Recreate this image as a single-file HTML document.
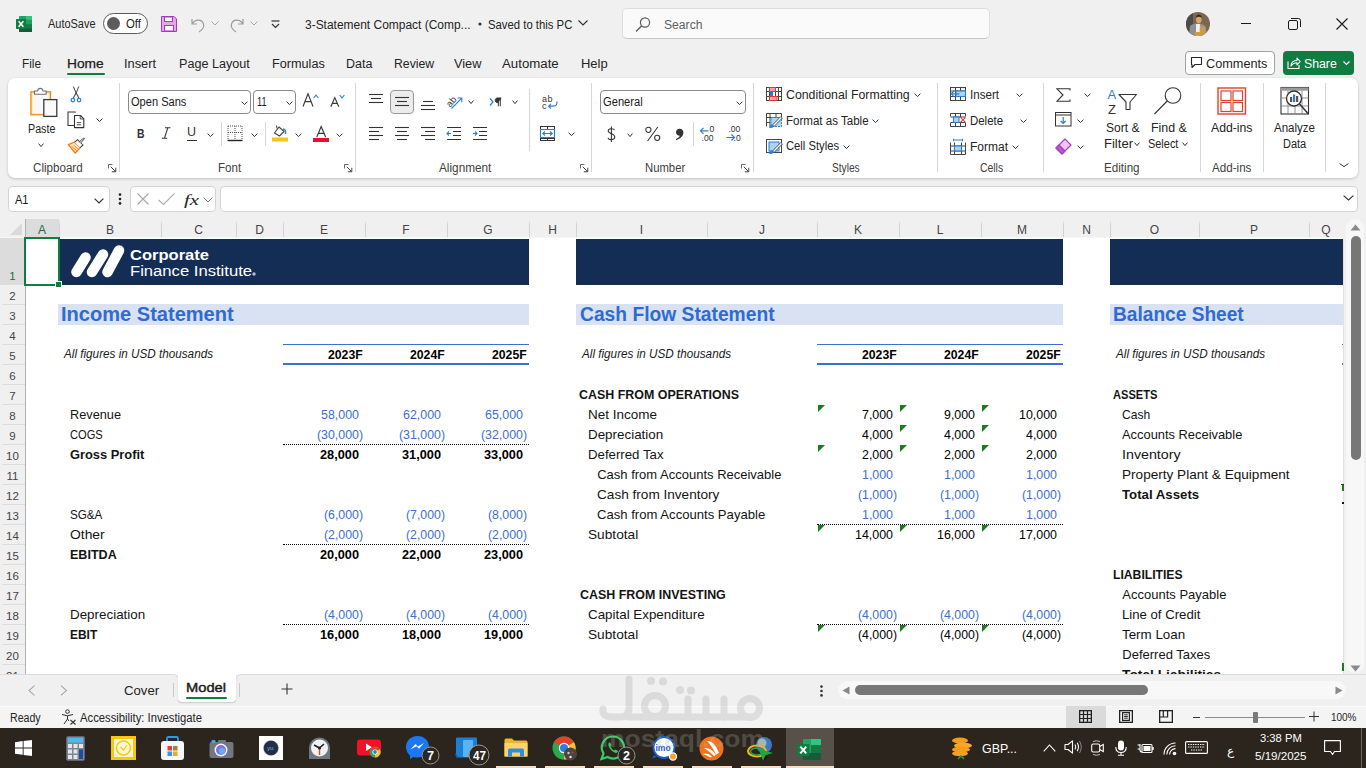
<!DOCTYPE html>
<html><head><meta charset="utf-8"><title>Excel</title>
<style>
html,body{margin:0;padding:0;width:1366px;height:768px;overflow:hidden;background:#f0f0f0;font-family:"Liberation Sans",sans-serif;}
body{position:relative;}
svg{overflow:visible;}
</style></head><body>
<div style="position:absolute;left:8px;top:78px;width:1350px;height:100px;background:#ffffff;border-radius:7px;box-shadow:0 1px 3px rgba(0,0,0,0.2);"></div><div style="position:absolute;left:25px;top:238px;width:1319px;height:436px;background:#ffffff;"></div><div style="position:absolute;left:0px;top:219px;width:1344px;height:19px;background:#f0f0f0;"></div><div style="position:absolute;left:25px;top:219px;width:34px;height:19px;background:#dcdcdc;"></div><div style="position:absolute;left:0px;top:237px;width:1344px;height:1px;background:#f6f6f6;"></div><div style="position:absolute;left:37.99px;top:223.64px;white-space:pre;line-height:1;font-family:'Liberation Sans',sans-serif;font-size:12px;font-weight:normal;font-style:normal;color:#1e6b3e;">A</div><div style="position:absolute;left:59px;top:220px;width:1px;height:17px;background:linear-gradient(to bottom, rgba(212,212,212,0), #d2d2d2 30%, #d2d2d2);"></div><div style="position:absolute;left:105.99px;top:223.64px;white-space:pre;line-height:1;font-family:'Liberation Sans',sans-serif;font-size:12px;font-weight:normal;font-style:normal;color:#444444;">B</div><div style="position:absolute;left:161px;top:220px;width:1px;height:17px;background:linear-gradient(to bottom, rgba(212,212,212,0), #d2d2d2 30%, #d2d2d2);"></div><div style="position:absolute;left:194.16px;top:223.64px;white-space:pre;line-height:1;font-family:'Liberation Sans',sans-serif;font-size:12px;font-weight:normal;font-style:normal;color:#444444;">C</div><div style="position:absolute;left:236px;top:220px;width:1px;height:17px;background:linear-gradient(to bottom, rgba(212,212,212,0), #d2d2d2 30%, #d2d2d2);"></div><div style="position:absolute;left:255.16px;top:223.64px;white-space:pre;line-height:1;font-family:'Liberation Sans',sans-serif;font-size:12px;font-weight:normal;font-style:normal;color:#444444;">D</div><div style="position:absolute;left:283px;top:220px;width:1px;height:17px;background:linear-gradient(to bottom, rgba(212,212,212,0), #d2d2d2 30%, #d2d2d2);"></div><div style="position:absolute;left:319.99px;top:223.64px;white-space:pre;line-height:1;font-family:'Liberation Sans',sans-serif;font-size:12px;font-weight:normal;font-style:normal;color:#444444;">E</div><div style="position:absolute;left:365px;top:220px;width:1px;height:17px;background:linear-gradient(to bottom, rgba(212,212,212,0), #d2d2d2 30%, #d2d2d2);"></div><div style="position:absolute;left:402.33px;top:223.64px;white-space:pre;line-height:1;font-family:'Liberation Sans',sans-serif;font-size:12px;font-weight:normal;font-style:normal;color:#444444;">F</div><div style="position:absolute;left:447px;top:220px;width:1px;height:17px;background:linear-gradient(to bottom, rgba(212,212,212,0), #d2d2d2 30%, #d2d2d2);"></div><div style="position:absolute;left:483.33px;top:223.64px;white-space:pre;line-height:1;font-family:'Liberation Sans',sans-serif;font-size:12px;font-weight:normal;font-style:normal;color:#444444;">G</div><div style="position:absolute;left:529px;top:220px;width:1px;height:17px;background:linear-gradient(to bottom, rgba(212,212,212,0), #d2d2d2 30%, #d2d2d2);"></div><div style="position:absolute;left:548.16px;top:223.64px;white-space:pre;line-height:1;font-family:'Liberation Sans',sans-serif;font-size:12px;font-weight:normal;font-style:normal;color:#444444;">H</div><div style="position:absolute;left:576px;top:220px;width:1px;height:17px;background:linear-gradient(to bottom, rgba(212,212,212,0), #d2d2d2 30%, #d2d2d2);"></div><div style="position:absolute;left:639.83px;top:223.64px;white-space:pre;line-height:1;font-family:'Liberation Sans',sans-serif;font-size:12px;font-weight:normal;font-style:normal;color:#444444;">I</div><div style="position:absolute;left:707px;top:220px;width:1px;height:17px;background:linear-gradient(to bottom, rgba(212,212,212,0), #d2d2d2 30%, #d2d2d2);"></div><div style="position:absolute;left:759.00px;top:223.64px;white-space:pre;line-height:1;font-family:'Liberation Sans',sans-serif;font-size:12px;font-weight:normal;font-style:normal;color:#444444;">J</div><div style="position:absolute;left:817px;top:220px;width:1px;height:17px;background:linear-gradient(to bottom, rgba(212,212,212,0), #d2d2d2 30%, #d2d2d2);"></div><div style="position:absolute;left:853.99px;top:223.64px;white-space:pre;line-height:1;font-family:'Liberation Sans',sans-serif;font-size:12px;font-weight:normal;font-style:normal;color:#444444;">K</div><div style="position:absolute;left:899px;top:220px;width:1px;height:17px;background:linear-gradient(to bottom, rgba(212,212,212,0), #d2d2d2 30%, #d2d2d2);"></div><div style="position:absolute;left:936.66px;top:223.64px;white-space:pre;line-height:1;font-family:'Liberation Sans',sans-serif;font-size:12px;font-weight:normal;font-style:normal;color:#444444;">L</div><div style="position:absolute;left:981px;top:220px;width:1px;height:17px;background:linear-gradient(to bottom, rgba(212,212,212,0), #d2d2d2 30%, #d2d2d2);"></div><div style="position:absolute;left:1017.00px;top:223.64px;white-space:pre;line-height:1;font-family:'Liberation Sans',sans-serif;font-size:12px;font-weight:normal;font-style:normal;color:#444444;">M</div><div style="position:absolute;left:1063px;top:220px;width:1px;height:17px;background:linear-gradient(to bottom, rgba(212,212,212,0), #d2d2d2 30%, #d2d2d2);"></div><div style="position:absolute;left:1082.16px;top:223.64px;white-space:pre;line-height:1;font-family:'Liberation Sans',sans-serif;font-size:12px;font-weight:normal;font-style:normal;color:#444444;">N</div><div style="position:absolute;left:1110px;top:220px;width:1px;height:17px;background:linear-gradient(to bottom, rgba(212,212,212,0), #d2d2d2 30%, #d2d2d2);"></div><div style="position:absolute;left:1149.83px;top:223.64px;white-space:pre;line-height:1;font-family:'Liberation Sans',sans-serif;font-size:12px;font-weight:normal;font-style:normal;color:#444444;">O</div><div style="position:absolute;left:1199px;top:220px;width:1px;height:17px;background:linear-gradient(to bottom, rgba(212,212,212,0), #d2d2d2 30%, #d2d2d2);"></div><div style="position:absolute;left:1249.99px;top:223.64px;white-space:pre;line-height:1;font-family:'Liberation Sans',sans-serif;font-size:12px;font-weight:normal;font-style:normal;color:#444444;">P</div><div style="position:absolute;left:1309px;top:220px;width:1px;height:17px;background:linear-gradient(to bottom, rgba(212,212,212,0), #d2d2d2 30%, #d2d2d2);"></div><div style="position:absolute;left:1321.33px;top:223.64px;white-space:pre;line-height:1;font-family:'Liberation Sans',sans-serif;font-size:12px;font-weight:normal;font-style:normal;color:#444444;">Q</div><svg style="position:absolute;left:10px;top:223px;" width="12" height="12" viewBox="0 0 12 12"><polygon points="12,0 12,12 0,12" fill="#dadada"/></svg><div style="position:absolute;left:0px;top:238px;width:25px;height:436px;background:#f0f0f0;"></div><div style="position:absolute;left:0px;top:238px;width:25px;height:47px;background:#dcdcdc;"></div><div style="position:absolute;left:25px;top:219px;width:1px;height:455px;background:#b0b0b0;"></div><div style="position:absolute;left:2px;top:284px;width:23px;height:1px;background:#dedede;"></div><div style="position:absolute;left:9.30px;top:270.67px;white-space:pre;line-height:1;font-family:'Liberation Sans',sans-serif;font-size:11.5px;font-weight:normal;font-style:normal;color:#1e6b3e;">1</div><div style="position:absolute;left:2px;top:304px;width:23px;height:1px;background:#dedede;"></div><div style="position:absolute;left:9.30px;top:290.67px;white-space:pre;line-height:1;font-family:'Liberation Sans',sans-serif;font-size:11.5px;font-weight:normal;font-style:normal;color:#444444;">2</div><div style="position:absolute;left:2px;top:324px;width:23px;height:1px;background:#dedede;"></div><div style="position:absolute;left:9.30px;top:310.67px;white-space:pre;line-height:1;font-family:'Liberation Sans',sans-serif;font-size:11.5px;font-weight:normal;font-style:normal;color:#444444;">3</div><div style="position:absolute;left:2px;top:344px;width:23px;height:1px;background:#dedede;"></div><div style="position:absolute;left:9.30px;top:330.67px;white-space:pre;line-height:1;font-family:'Liberation Sans',sans-serif;font-size:11.5px;font-weight:normal;font-style:normal;color:#444444;">4</div><div style="position:absolute;left:2px;top:364px;width:23px;height:1px;background:#dedede;"></div><div style="position:absolute;left:9.30px;top:350.67px;white-space:pre;line-height:1;font-family:'Liberation Sans',sans-serif;font-size:11.5px;font-weight:normal;font-style:normal;color:#444444;">5</div><div style="position:absolute;left:2px;top:384px;width:23px;height:1px;background:#dedede;"></div><div style="position:absolute;left:9.30px;top:370.67px;white-space:pre;line-height:1;font-family:'Liberation Sans',sans-serif;font-size:11.5px;font-weight:normal;font-style:normal;color:#444444;">6</div><div style="position:absolute;left:2px;top:404px;width:23px;height:1px;background:#dedede;"></div><div style="position:absolute;left:9.30px;top:390.67px;white-space:pre;line-height:1;font-family:'Liberation Sans',sans-serif;font-size:11.5px;font-weight:normal;font-style:normal;color:#444444;">7</div><div style="position:absolute;left:2px;top:424px;width:23px;height:1px;background:#dedede;"></div><div style="position:absolute;left:9.30px;top:410.67px;white-space:pre;line-height:1;font-family:'Liberation Sans',sans-serif;font-size:11.5px;font-weight:normal;font-style:normal;color:#444444;">8</div><div style="position:absolute;left:2px;top:444px;width:23px;height:1px;background:#dedede;"></div><div style="position:absolute;left:9.30px;top:430.67px;white-space:pre;line-height:1;font-family:'Liberation Sans',sans-serif;font-size:11.5px;font-weight:normal;font-style:normal;color:#444444;">9</div><div style="position:absolute;left:2px;top:464px;width:23px;height:1px;background:#dedede;"></div><div style="position:absolute;left:6.10px;top:450.67px;white-space:pre;line-height:1;font-family:'Liberation Sans',sans-serif;font-size:11.5px;font-weight:normal;font-style:normal;color:#444444;">10</div><div style="position:absolute;left:2px;top:484px;width:23px;height:1px;background:#dedede;"></div><div style="position:absolute;left:6.52px;top:470.67px;white-space:pre;line-height:1;font-family:'Liberation Sans',sans-serif;font-size:11.5px;font-weight:normal;font-style:normal;color:#444444;">11</div><div style="position:absolute;left:2px;top:504px;width:23px;height:1px;background:#dedede;"></div><div style="position:absolute;left:6.10px;top:490.67px;white-space:pre;line-height:1;font-family:'Liberation Sans',sans-serif;font-size:11.5px;font-weight:normal;font-style:normal;color:#444444;">12</div><div style="position:absolute;left:2px;top:524px;width:23px;height:1px;background:#dedede;"></div><div style="position:absolute;left:6.10px;top:510.67px;white-space:pre;line-height:1;font-family:'Liberation Sans',sans-serif;font-size:11.5px;font-weight:normal;font-style:normal;color:#444444;">13</div><div style="position:absolute;left:2px;top:544px;width:23px;height:1px;background:#dedede;"></div><div style="position:absolute;left:6.10px;top:530.67px;white-space:pre;line-height:1;font-family:'Liberation Sans',sans-serif;font-size:11.5px;font-weight:normal;font-style:normal;color:#444444;">14</div><div style="position:absolute;left:2px;top:564px;width:23px;height:1px;background:#dedede;"></div><div style="position:absolute;left:6.10px;top:550.67px;white-space:pre;line-height:1;font-family:'Liberation Sans',sans-serif;font-size:11.5px;font-weight:normal;font-style:normal;color:#444444;">15</div><div style="position:absolute;left:2px;top:584px;width:23px;height:1px;background:#dedede;"></div><div style="position:absolute;left:6.10px;top:570.67px;white-space:pre;line-height:1;font-family:'Liberation Sans',sans-serif;font-size:11.5px;font-weight:normal;font-style:normal;color:#444444;">16</div><div style="position:absolute;left:2px;top:604px;width:23px;height:1px;background:#dedede;"></div><div style="position:absolute;left:6.10px;top:590.67px;white-space:pre;line-height:1;font-family:'Liberation Sans',sans-serif;font-size:11.5px;font-weight:normal;font-style:normal;color:#444444;">17</div><div style="position:absolute;left:2px;top:624px;width:23px;height:1px;background:#dedede;"></div><div style="position:absolute;left:6.10px;top:610.67px;white-space:pre;line-height:1;font-family:'Liberation Sans',sans-serif;font-size:11.5px;font-weight:normal;font-style:normal;color:#444444;">18</div><div style="position:absolute;left:2px;top:644px;width:23px;height:1px;background:#dedede;"></div><div style="position:absolute;left:6.10px;top:630.67px;white-space:pre;line-height:1;font-family:'Liberation Sans',sans-serif;font-size:11.5px;font-weight:normal;font-style:normal;color:#444444;">19</div><div style="position:absolute;left:2px;top:664px;width:23px;height:1px;background:#dedede;"></div><div style="position:absolute;left:6.10px;top:650.67px;white-space:pre;line-height:1;font-family:'Liberation Sans',sans-serif;font-size:11.5px;font-weight:normal;font-style:normal;color:#444444;">20</div><div style="position:absolute;left:6.10px;top:670.67px;white-space:pre;line-height:1;font-family:'Liberation Sans',sans-serif;font-size:11.5px;font-weight:normal;font-style:normal;color:#444444;">21</div><div style="position:absolute;left:59px;top:239px;width:470px;height:46px;background:#142d55;"></div><div style="position:absolute;left:576px;top:239px;width:487px;height:46px;background:#142d55;"></div><div style="position:absolute;left:1110px;top:239px;width:234px;height:46px;background:#142d55;"></div><div style="position:absolute;left:58px;top:304px;width:471px;height:21px;background:#d9e2f3;"></div><div style="position:absolute;left:576px;top:304px;width:487px;height:21px;background:#d9e2f3;"></div><div style="position:absolute;left:1110px;top:304px;width:234px;height:21px;background:#d9e2f3;"></div><div style="position:absolute;left:61.20px;top:305.49px;white-space:pre;line-height:1;font-family:'Liberation Sans',sans-serif;font-size:19.5px;font-weight:bold;font-style:normal;color:#2f6bd5;transform:scaleX(1.0282);transform-origin:0 0;">Income Statement</div><div style="position:absolute;left:580.00px;top:305.49px;white-space:pre;line-height:1;font-family:'Liberation Sans',sans-serif;font-size:19.5px;font-weight:bold;font-style:normal;color:#2f6bd5;transform:scaleX(0.9868);transform-origin:0 0;">Cash Flow Statement</div><div style="position:absolute;left:1113.40px;top:305.49px;white-space:pre;line-height:1;font-family:'Liberation Sans',sans-serif;font-size:19.5px;font-weight:bold;font-style:normal;color:#2f6bd5;transform:scaleX(0.9804);transform-origin:0 0;">Balance Sheet</div><div style="position:absolute;left:63.70px;top:347.84px;white-space:pre;line-height:1;font-family:'Liberation Sans',sans-serif;font-size:12px;font-weight:normal;font-style:italic;color:#1a1a1a;transform:scaleX(0.9755);transform-origin:0 0;">All figures in USD thousands</div><div style="position:absolute;left:581.80px;top:347.84px;white-space:pre;line-height:1;font-family:'Liberation Sans',sans-serif;font-size:12px;font-weight:normal;font-style:italic;color:#1a1a1a;transform:scaleX(0.9755);transform-origin:0 0;">All figures in USD thousands</div><div style="position:absolute;left:1115.70px;top:347.84px;white-space:pre;line-height:1;font-family:'Liberation Sans',sans-serif;font-size:12px;font-weight:normal;font-style:italic;color:#1a1a1a;transform:scaleX(0.9755);transform-origin:0 0;">All figures in USD thousands</div><div style="position:absolute;left:283px;top:344px;width:246px;height:1px;background:#3a6fd6;"></div><div style="position:absolute;left:283px;top:363px;width:246px;height:2px;background:#3a6fd6;"></div><div style="position:absolute;left:817px;top:344px;width:246px;height:1px;background:#3a6fd6;"></div><div style="position:absolute;left:817px;top:363px;width:246px;height:2px;background:#3a6fd6;"></div><div style="position:absolute;left:1342px;top:344px;width:2px;height:1px;background:#3a6fd6;"></div><div style="position:absolute;left:1342px;top:363px;width:2px;height:2px;background:#3a6fd6;"></div><div style="position:absolute;left:328.30px;top:349.02px;white-space:pre;line-height:1;font-family:'Liberation Sans',sans-serif;font-size:12.5px;font-weight:bold;font-style:normal;color:#000000;transform:scaleX(0.9788);transform-origin:0 0;">2023F</div><div style="position:absolute;left:410.30px;top:349.02px;white-space:pre;line-height:1;font-family:'Liberation Sans',sans-serif;font-size:12.5px;font-weight:bold;font-style:normal;color:#000000;transform:scaleX(0.9788);transform-origin:0 0;">2024F</div><div style="position:absolute;left:492.30px;top:349.02px;white-space:pre;line-height:1;font-family:'Liberation Sans',sans-serif;font-size:12.5px;font-weight:bold;font-style:normal;color:#000000;transform:scaleX(0.9788);transform-origin:0 0;">2025F</div><div style="position:absolute;left:861.80px;top:349.02px;white-space:pre;line-height:1;font-family:'Liberation Sans',sans-serif;font-size:12.5px;font-weight:bold;font-style:normal;color:#000000;transform:scaleX(0.9788);transform-origin:0 0;">2023F</div><div style="position:absolute;left:943.80px;top:349.02px;white-space:pre;line-height:1;font-family:'Liberation Sans',sans-serif;font-size:12.5px;font-weight:bold;font-style:normal;color:#000000;transform:scaleX(0.9788);transform-origin:0 0;">2024F</div><div style="position:absolute;left:1025.80px;top:349.02px;white-space:pre;line-height:1;font-family:'Liberation Sans',sans-serif;font-size:12.5px;font-weight:bold;font-style:normal;color:#000000;transform:scaleX(0.9788);transform-origin:0 0;">2025F</div><div style="position:absolute;left:70.30px;top:408.00px;white-space:pre;line-height:1;font-family:'Liberation Sans',sans-serif;font-size:13px;font-weight:normal;font-style:normal;color:#141414;transform:scaleX(0.9799);transform-origin:0 0;">Revenue</div><div style="position:absolute;left:320.80px;top:409.22px;white-space:pre;line-height:1;font-family:'Liberation Sans',sans-serif;font-size:12.5px;font-weight:normal;font-style:normal;color:#3b6fd2;transform:scaleX(0.9939);transform-origin:0 0;">58,000</div><div style="position:absolute;left:402.80px;top:409.22px;white-space:pre;line-height:1;font-family:'Liberation Sans',sans-serif;font-size:12.5px;font-weight:normal;font-style:normal;color:#3b6fd2;transform:scaleX(0.9939);transform-origin:0 0;">62,000</div><div style="position:absolute;left:484.80px;top:409.22px;white-space:pre;line-height:1;font-family:'Liberation Sans',sans-serif;font-size:12.5px;font-weight:normal;font-style:normal;color:#3b6fd2;transform:scaleX(0.9939);transform-origin:0 0;">65,000</div><div style="position:absolute;left:70.30px;top:428.00px;white-space:pre;line-height:1;font-family:'Liberation Sans',sans-serif;font-size:13px;font-weight:normal;font-style:normal;color:#141414;transform:scaleX(0.8565);transform-origin:0 0;">COGS</div><div style="position:absolute;left:317.20px;top:429.22px;white-space:pre;line-height:1;font-family:'Liberation Sans',sans-serif;font-size:12.5px;font-weight:normal;font-style:normal;color:#3b6fd2;transform:scaleX(0.9879);transform-origin:0 0;">(30,000)</div><div style="position:absolute;left:399.20px;top:429.22px;white-space:pre;line-height:1;font-family:'Liberation Sans',sans-serif;font-size:12.5px;font-weight:normal;font-style:normal;color:#3b6fd2;transform:scaleX(0.9879);transform-origin:0 0;">(31,000)</div><div style="position:absolute;left:481.20px;top:429.22px;white-space:pre;line-height:1;font-family:'Liberation Sans',sans-serif;font-size:12.5px;font-weight:normal;font-style:normal;color:#3b6fd2;transform:scaleX(0.9879);transform-origin:0 0;">(32,000)</div><div style="position:absolute;left:70.30px;top:448.00px;white-space:pre;line-height:1;font-family:'Liberation Sans',sans-serif;font-size:13px;font-weight:bold;font-style:normal;color:#141414;transform:scaleX(0.9890);transform-origin:0 0;">Gross Profit</div><div style="position:absolute;left:319.80px;top:449.22px;white-space:pre;line-height:1;font-family:'Liberation Sans',sans-serif;font-size:12.5px;font-weight:bold;font-style:normal;color:#000000;transform:scaleX(1.0200);transform-origin:0 0;">28,000</div><div style="position:absolute;left:401.80px;top:449.22px;white-space:pre;line-height:1;font-family:'Liberation Sans',sans-serif;font-size:12.5px;font-weight:bold;font-style:normal;color:#000000;transform:scaleX(1.0200);transform-origin:0 0;">31,000</div><div style="position:absolute;left:483.80px;top:449.22px;white-space:pre;line-height:1;font-family:'Liberation Sans',sans-serif;font-size:12.5px;font-weight:bold;font-style:normal;color:#000000;transform:scaleX(1.0200);transform-origin:0 0;">33,000</div><div style="position:absolute;left:70.30px;top:508.00px;white-space:pre;line-height:1;font-family:'Liberation Sans',sans-serif;font-size:13px;font-weight:normal;font-style:normal;color:#141414;transform:scaleX(0.8969);transform-origin:0 0;">SG&amp;A</div><div style="position:absolute;left:324.20px;top:509.22px;white-space:pre;line-height:1;font-family:'Liberation Sans',sans-serif;font-size:12.5px;font-weight:normal;font-style:normal;color:#3b6fd2;transform:scaleX(0.9846);transform-origin:0 0;">(6,000)</div><div style="position:absolute;left:406.20px;top:509.22px;white-space:pre;line-height:1;font-family:'Liberation Sans',sans-serif;font-size:12.5px;font-weight:normal;font-style:normal;color:#3b6fd2;transform:scaleX(0.9846);transform-origin:0 0;">(7,000)</div><div style="position:absolute;left:488.20px;top:509.22px;white-space:pre;line-height:1;font-family:'Liberation Sans',sans-serif;font-size:12.5px;font-weight:normal;font-style:normal;color:#3b6fd2;transform:scaleX(0.9846);transform-origin:0 0;">(8,000)</div><div style="position:absolute;left:70.30px;top:528.00px;white-space:pre;line-height:1;font-family:'Liberation Sans',sans-serif;font-size:13px;font-weight:normal;font-style:normal;color:#141414;transform:scaleX(1.0672);transform-origin:0 0;">Other</div><div style="position:absolute;left:324.20px;top:529.22px;white-space:pre;line-height:1;font-family:'Liberation Sans',sans-serif;font-size:12.5px;font-weight:normal;font-style:normal;color:#3b6fd2;transform:scaleX(0.9846);transform-origin:0 0;">(2,000)</div><div style="position:absolute;left:406.20px;top:529.22px;white-space:pre;line-height:1;font-family:'Liberation Sans',sans-serif;font-size:12.5px;font-weight:normal;font-style:normal;color:#3b6fd2;transform:scaleX(0.9846);transform-origin:0 0;">(2,000)</div><div style="position:absolute;left:488.20px;top:529.22px;white-space:pre;line-height:1;font-family:'Liberation Sans',sans-serif;font-size:12.5px;font-weight:normal;font-style:normal;color:#3b6fd2;transform:scaleX(0.9846);transform-origin:0 0;">(2,000)</div><div style="position:absolute;left:70.30px;top:548.00px;white-space:pre;line-height:1;font-family:'Liberation Sans',sans-serif;font-size:13px;font-weight:bold;font-style:normal;color:#141414;transform:scaleX(0.9651);transform-origin:0 0;">EBITDA</div><div style="position:absolute;left:319.80px;top:549.22px;white-space:pre;line-height:1;font-family:'Liberation Sans',sans-serif;font-size:12.5px;font-weight:bold;font-style:normal;color:#000000;transform:scaleX(1.0200);transform-origin:0 0;">20,000</div><div style="position:absolute;left:401.80px;top:549.22px;white-space:pre;line-height:1;font-family:'Liberation Sans',sans-serif;font-size:12.5px;font-weight:bold;font-style:normal;color:#000000;transform:scaleX(1.0200);transform-origin:0 0;">22,000</div><div style="position:absolute;left:483.80px;top:549.22px;white-space:pre;line-height:1;font-family:'Liberation Sans',sans-serif;font-size:12.5px;font-weight:bold;font-style:normal;color:#000000;transform:scaleX(1.0200);transform-origin:0 0;">23,000</div><div style="position:absolute;left:70.30px;top:608.00px;white-space:pre;line-height:1;font-family:'Liberation Sans',sans-serif;font-size:13px;font-weight:normal;font-style:normal;color:#141414;transform:scaleX(1.0301);transform-origin:0 0;">Depreciation</div><div style="position:absolute;left:324.20px;top:609.22px;white-space:pre;line-height:1;font-family:'Liberation Sans',sans-serif;font-size:12.5px;font-weight:normal;font-style:normal;color:#3b6fd2;transform:scaleX(0.9846);transform-origin:0 0;">(4,000)</div><div style="position:absolute;left:406.20px;top:609.22px;white-space:pre;line-height:1;font-family:'Liberation Sans',sans-serif;font-size:12.5px;font-weight:normal;font-style:normal;color:#3b6fd2;transform:scaleX(0.9846);transform-origin:0 0;">(4,000)</div><div style="position:absolute;left:488.20px;top:609.22px;white-space:pre;line-height:1;font-family:'Liberation Sans',sans-serif;font-size:12.5px;font-weight:normal;font-style:normal;color:#3b6fd2;transform:scaleX(0.9846);transform-origin:0 0;">(4,000)</div><div style="position:absolute;left:70.30px;top:628.00px;white-space:pre;line-height:1;font-family:'Liberation Sans',sans-serif;font-size:13px;font-weight:bold;font-style:normal;color:#141414;transform:scaleX(0.9181);transform-origin:0 0;">EBIT</div><div style="position:absolute;left:319.80px;top:629.22px;white-space:pre;line-height:1;font-family:'Liberation Sans',sans-serif;font-size:12.5px;font-weight:bold;font-style:normal;color:#000000;transform:scaleX(1.0200);transform-origin:0 0;">16,000</div><div style="position:absolute;left:401.80px;top:629.22px;white-space:pre;line-height:1;font-family:'Liberation Sans',sans-serif;font-size:12.5px;font-weight:bold;font-style:normal;color:#000000;transform:scaleX(1.0200);transform-origin:0 0;">18,000</div><div style="position:absolute;left:483.80px;top:629.22px;white-space:pre;line-height:1;font-family:'Liberation Sans',sans-serif;font-size:12.5px;font-weight:bold;font-style:normal;color:#000000;transform:scaleX(1.0200);transform-origin:0 0;">19,000</div><div style="position:absolute;left:283px;top:444px;width:246px;height:0;border-top:1px dotted #000;"></div><div style="position:absolute;left:283px;top:544px;width:246px;height:0;border-top:1px dotted #000;"></div><div style="position:absolute;left:283px;top:624px;width:246px;height:0;border-top:1px dotted #000;"></div><div style="position:absolute;left:579.20px;top:388.00px;white-space:pre;line-height:1;font-family:'Liberation Sans',sans-serif;font-size:13px;font-weight:bold;font-style:normal;color:#141414;transform:scaleX(0.9562);transform-origin:0 0;">CASH FROM OPERATIONS</div><div style="position:absolute;left:588.10px;top:408.00px;white-space:pre;line-height:1;font-family:'Liberation Sans',sans-serif;font-size:13px;font-weight:normal;font-style:normal;color:#141414;transform:scaleX(1.0378);transform-origin:0 0;">Net Income</div><div style="position:absolute;left:861.80px;top:409.22px;white-space:pre;line-height:1;font-family:'Liberation Sans',sans-serif;font-size:12.5px;font-weight:normal;font-style:normal;color:#000000;transform:scaleX(0.9910);transform-origin:0 0;">7,000</div><div style="position:absolute;left:943.80px;top:409.22px;white-space:pre;line-height:1;font-family:'Liberation Sans',sans-serif;font-size:12.5px;font-weight:normal;font-style:normal;color:#000000;transform:scaleX(0.9910);transform-origin:0 0;">9,000</div><div style="position:absolute;left:1018.80px;top:409.22px;white-space:pre;line-height:1;font-family:'Liberation Sans',sans-serif;font-size:12.5px;font-weight:normal;font-style:normal;color:#000000;transform:scaleX(0.9939);transform-origin:0 0;">10,000</div><div style="position:absolute;left:588.10px;top:428.00px;white-space:pre;line-height:1;font-family:'Liberation Sans',sans-serif;font-size:13px;font-weight:normal;font-style:normal;color:#141414;transform:scaleX(1.0301);transform-origin:0 0;">Depreciation</div><div style="position:absolute;left:861.80px;top:429.22px;white-space:pre;line-height:1;font-family:'Liberation Sans',sans-serif;font-size:12.5px;font-weight:normal;font-style:normal;color:#000000;transform:scaleX(0.9910);transform-origin:0 0;">4,000</div><div style="position:absolute;left:943.80px;top:429.22px;white-space:pre;line-height:1;font-family:'Liberation Sans',sans-serif;font-size:12.5px;font-weight:normal;font-style:normal;color:#000000;transform:scaleX(0.9910);transform-origin:0 0;">4,000</div><div style="position:absolute;left:1025.80px;top:429.22px;white-space:pre;line-height:1;font-family:'Liberation Sans',sans-serif;font-size:12.5px;font-weight:normal;font-style:normal;color:#000000;transform:scaleX(0.9910);transform-origin:0 0;">4,000</div><div style="position:absolute;left:588.10px;top:448.00px;white-space:pre;line-height:1;font-family:'Liberation Sans',sans-serif;font-size:13px;font-weight:normal;font-style:normal;color:#141414;transform:scaleX(1.0177);transform-origin:0 0;">Deferred Tax</div><div style="position:absolute;left:861.80px;top:449.22px;white-space:pre;line-height:1;font-family:'Liberation Sans',sans-serif;font-size:12.5px;font-weight:normal;font-style:normal;color:#000000;transform:scaleX(0.9910);transform-origin:0 0;">2,000</div><div style="position:absolute;left:943.80px;top:449.22px;white-space:pre;line-height:1;font-family:'Liberation Sans',sans-serif;font-size:12.5px;font-weight:normal;font-style:normal;color:#000000;transform:scaleX(0.9910);transform-origin:0 0;">2,000</div><div style="position:absolute;left:1025.80px;top:449.22px;white-space:pre;line-height:1;font-family:'Liberation Sans',sans-serif;font-size:12.5px;font-weight:normal;font-style:normal;color:#000000;transform:scaleX(0.9910);transform-origin:0 0;">2,000</div><div style="position:absolute;left:597.20px;top:468.00px;white-space:pre;line-height:1;font-family:'Liberation Sans',sans-serif;font-size:13px;font-weight:normal;font-style:normal;color:#141414;">Cash from Accounts Receivable</div><div style="position:absolute;left:861.80px;top:469.22px;white-space:pre;line-height:1;font-family:'Liberation Sans',sans-serif;font-size:12.5px;font-weight:normal;font-style:normal;color:#3b6fd2;transform:scaleX(0.9910);transform-origin:0 0;">1,000</div><div style="position:absolute;left:943.80px;top:469.22px;white-space:pre;line-height:1;font-family:'Liberation Sans',sans-serif;font-size:12.5px;font-weight:normal;font-style:normal;color:#3b6fd2;transform:scaleX(0.9910);transform-origin:0 0;">1,000</div><div style="position:absolute;left:1025.80px;top:469.22px;white-space:pre;line-height:1;font-family:'Liberation Sans',sans-serif;font-size:12.5px;font-weight:normal;font-style:normal;color:#3b6fd2;transform:scaleX(0.9910);transform-origin:0 0;">1,000</div><div style="position:absolute;left:597.20px;top:488.00px;white-space:pre;line-height:1;font-family:'Liberation Sans',sans-serif;font-size:13px;font-weight:normal;font-style:normal;color:#141414;transform:scaleX(1.0457);transform-origin:0 0;">Cash from Inventory</div><div style="position:absolute;left:858.20px;top:489.22px;white-space:pre;line-height:1;font-family:'Liberation Sans',sans-serif;font-size:12.5px;font-weight:normal;font-style:normal;color:#3b6fd2;transform:scaleX(0.9846);transform-origin:0 0;">(1,000)</div><div style="position:absolute;left:940.20px;top:489.22px;white-space:pre;line-height:1;font-family:'Liberation Sans',sans-serif;font-size:12.5px;font-weight:normal;font-style:normal;color:#3b6fd2;transform:scaleX(0.9846);transform-origin:0 0;">(1,000)</div><div style="position:absolute;left:1022.20px;top:489.22px;white-space:pre;line-height:1;font-family:'Liberation Sans',sans-serif;font-size:12.5px;font-weight:normal;font-style:normal;color:#3b6fd2;transform:scaleX(0.9846);transform-origin:0 0;">(1,000)</div><div style="position:absolute;left:597.20px;top:508.00px;white-space:pre;line-height:1;font-family:'Liberation Sans',sans-serif;font-size:13px;font-weight:normal;font-style:normal;color:#141414;transform:scaleX(1.0077);transform-origin:0 0;">Cash from Accounts Payable</div><div style="position:absolute;left:861.80px;top:509.22px;white-space:pre;line-height:1;font-family:'Liberation Sans',sans-serif;font-size:12.5px;font-weight:normal;font-style:normal;color:#3b6fd2;transform:scaleX(0.9910);transform-origin:0 0;">1,000</div><div style="position:absolute;left:943.80px;top:509.22px;white-space:pre;line-height:1;font-family:'Liberation Sans',sans-serif;font-size:12.5px;font-weight:normal;font-style:normal;color:#3b6fd2;transform:scaleX(0.9910);transform-origin:0 0;">1,000</div><div style="position:absolute;left:1025.80px;top:509.22px;white-space:pre;line-height:1;font-family:'Liberation Sans',sans-serif;font-size:12.5px;font-weight:normal;font-style:normal;color:#3b6fd2;transform:scaleX(0.9910);transform-origin:0 0;">1,000</div><div style="position:absolute;left:588.10px;top:528.00px;white-space:pre;line-height:1;font-family:'Liberation Sans',sans-serif;font-size:13px;font-weight:normal;font-style:normal;color:#141414;transform:scaleX(1.0523);transform-origin:0 0;">Subtotal</div><div style="position:absolute;left:854.80px;top:529.22px;white-space:pre;line-height:1;font-family:'Liberation Sans',sans-serif;font-size:12.5px;font-weight:normal;font-style:normal;color:#000000;transform:scaleX(0.9939);transform-origin:0 0;">14,000</div><div style="position:absolute;left:936.80px;top:529.22px;white-space:pre;line-height:1;font-family:'Liberation Sans',sans-serif;font-size:12.5px;font-weight:normal;font-style:normal;color:#000000;transform:scaleX(0.9939);transform-origin:0 0;">16,000</div><div style="position:absolute;left:1018.80px;top:529.22px;white-space:pre;line-height:1;font-family:'Liberation Sans',sans-serif;font-size:12.5px;font-weight:normal;font-style:normal;color:#000000;transform:scaleX(0.9939);transform-origin:0 0;">17,000</div><div style="position:absolute;left:579.50px;top:588.00px;white-space:pre;line-height:1;font-family:'Liberation Sans',sans-serif;font-size:13px;font-weight:bold;font-style:normal;color:#141414;transform:scaleX(0.9567);transform-origin:0 0;">CASH FROM INVESTING</div><div style="position:absolute;left:588.10px;top:608.00px;white-space:pre;line-height:1;font-family:'Liberation Sans',sans-serif;font-size:13px;font-weight:normal;font-style:normal;color:#141414;transform:scaleX(1.0285);transform-origin:0 0;">Capital Expenditure</div><div style="position:absolute;left:858.20px;top:609.22px;white-space:pre;line-height:1;font-family:'Liberation Sans',sans-serif;font-size:12.5px;font-weight:normal;font-style:normal;color:#3b6fd2;transform:scaleX(0.9846);transform-origin:0 0;">(4,000)</div><div style="position:absolute;left:940.20px;top:609.22px;white-space:pre;line-height:1;font-family:'Liberation Sans',sans-serif;font-size:12.5px;font-weight:normal;font-style:normal;color:#3b6fd2;transform:scaleX(0.9846);transform-origin:0 0;">(4,000)</div><div style="position:absolute;left:1022.20px;top:609.22px;white-space:pre;line-height:1;font-family:'Liberation Sans',sans-serif;font-size:12.5px;font-weight:normal;font-style:normal;color:#3b6fd2;transform:scaleX(0.9846);transform-origin:0 0;">(4,000)</div><div style="position:absolute;left:588.10px;top:628.00px;white-space:pre;line-height:1;font-family:'Liberation Sans',sans-serif;font-size:13px;font-weight:normal;font-style:normal;color:#141414;transform:scaleX(1.0523);transform-origin:0 0;">Subtotal</div><div style="position:absolute;left:858.20px;top:629.22px;white-space:pre;line-height:1;font-family:'Liberation Sans',sans-serif;font-size:12.5px;font-weight:normal;font-style:normal;color:#000000;transform:scaleX(0.9846);transform-origin:0 0;">(4,000)</div><div style="position:absolute;left:940.20px;top:629.22px;white-space:pre;line-height:1;font-family:'Liberation Sans',sans-serif;font-size:12.5px;font-weight:normal;font-style:normal;color:#000000;transform:scaleX(0.9846);transform-origin:0 0;">(4,000)</div><div style="position:absolute;left:1022.20px;top:629.22px;white-space:pre;line-height:1;font-family:'Liberation Sans',sans-serif;font-size:12.5px;font-weight:normal;font-style:normal;color:#000000;transform:scaleX(0.9846);transform-origin:0 0;">(4,000)</div><div style="position:absolute;left:817px;top:524px;width:246px;height:0;border-top:1px dotted #000;"></div><div style="position:absolute;left:817px;top:624px;width:246px;height:0;border-top:1px dotted #000;"></div><svg style="position:absolute;left:818px;top:405px;" width="7" height="7" viewBox="0 0 7 7"><polygon points="0,0 7,0 0,7" fill="#1a7c1a"/></svg><svg style="position:absolute;left:900px;top:405px;" width="7" height="7" viewBox="0 0 7 7"><polygon points="0,0 7,0 0,7" fill="#1a7c1a"/></svg><svg style="position:absolute;left:982px;top:405px;" width="7" height="7" viewBox="0 0 7 7"><polygon points="0,0 7,0 0,7" fill="#1a7c1a"/></svg><svg style="position:absolute;left:900px;top:425px;" width="7" height="7" viewBox="0 0 7 7"><polygon points="0,0 7,0 0,7" fill="#1a7c1a"/></svg><svg style="position:absolute;left:982px;top:425px;" width="7" height="7" viewBox="0 0 7 7"><polygon points="0,0 7,0 0,7" fill="#1a7c1a"/></svg><svg style="position:absolute;left:818px;top:445px;" width="7" height="7" viewBox="0 0 7 7"><polygon points="0,0 7,0 0,7" fill="#1a7c1a"/></svg><svg style="position:absolute;left:900px;top:445px;" width="7" height="7" viewBox="0 0 7 7"><polygon points="0,0 7,0 0,7" fill="#1a7c1a"/></svg><svg style="position:absolute;left:982px;top:445px;" width="7" height="7" viewBox="0 0 7 7"><polygon points="0,0 7,0 0,7" fill="#1a7c1a"/></svg><svg style="position:absolute;left:818px;top:525px;" width="7" height="7" viewBox="0 0 7 7"><polygon points="0,0 7,0 0,7" fill="#1a7c1a"/></svg><svg style="position:absolute;left:900px;top:525px;" width="7" height="7" viewBox="0 0 7 7"><polygon points="0,0 7,0 0,7" fill="#1a7c1a"/></svg><svg style="position:absolute;left:982px;top:525px;" width="7" height="7" viewBox="0 0 7 7"><polygon points="0,0 7,0 0,7" fill="#1a7c1a"/></svg><svg style="position:absolute;left:818px;top:625px;" width="7" height="7" viewBox="0 0 7 7"><polygon points="0,0 7,0 0,7" fill="#1a7c1a"/></svg><svg style="position:absolute;left:900px;top:625px;" width="7" height="7" viewBox="0 0 7 7"><polygon points="0,0 7,0 0,7" fill="#1a7c1a"/></svg><svg style="position:absolute;left:982px;top:625px;" width="7" height="7" viewBox="0 0 7 7"><polygon points="0,0 7,0 0,7" fill="#1a7c1a"/></svg><div style="position:absolute;left:1112.90px;top:388.00px;white-space:pre;line-height:1;font-family:'Liberation Sans',sans-serif;font-size:13px;font-weight:bold;font-style:normal;color:#141414;transform:scaleX(0.8555);transform-origin:0 0;">ASSETS</div><div style="position:absolute;left:1122.30px;top:408.00px;white-space:pre;line-height:1;font-family:'Liberation Sans',sans-serif;font-size:13px;font-weight:normal;font-style:normal;color:#141414;transform:scaleX(0.9289);transform-origin:0 0;">Cash</div><div style="position:absolute;left:1122.30px;top:428.00px;white-space:pre;line-height:1;font-family:'Liberation Sans',sans-serif;font-size:13px;font-weight:normal;font-style:normal;color:#141414;transform:scaleX(0.9909);transform-origin:0 0;">Accounts Receivable</div><div style="position:absolute;left:1122.30px;top:448.00px;white-space:pre;line-height:1;font-family:'Liberation Sans',sans-serif;font-size:13px;font-weight:normal;font-style:normal;color:#141414;transform:scaleX(1.0956);transform-origin:0 0;">Inventory</div><div style="position:absolute;left:1122.30px;top:468.00px;white-space:pre;line-height:1;font-family:'Liberation Sans',sans-serif;font-size:13px;font-weight:normal;font-style:normal;color:#141414;transform:scaleX(1.0447);transform-origin:0 0;">Property Plant &amp; Equipment</div><div style="position:absolute;left:1122.30px;top:488.00px;white-space:pre;line-height:1;font-family:'Liberation Sans',sans-serif;font-size:13px;font-weight:bold;font-style:normal;color:#141414;transform:scaleX(1.0177);transform-origin:0 0;">Total Assets</div><div style="position:absolute;left:1113.30px;top:568.00px;white-space:pre;line-height:1;font-family:'Liberation Sans',sans-serif;font-size:13px;font-weight:bold;font-style:normal;color:#141414;transform:scaleX(0.9356);transform-origin:0 0;">LIABILITIES</div><div style="position:absolute;left:1122.30px;top:588.00px;white-space:pre;line-height:1;font-family:'Liberation Sans',sans-serif;font-size:13px;font-weight:normal;font-style:normal;color:#141414;">Accounts Payable</div><div style="position:absolute;left:1122.30px;top:608.00px;white-space:pre;line-height:1;font-family:'Liberation Sans',sans-serif;font-size:13px;font-weight:normal;font-style:normal;color:#141414;transform:scaleX(1.0126);transform-origin:0 0;">Line of Credit</div><div style="position:absolute;left:1122.30px;top:628.00px;white-space:pre;line-height:1;font-family:'Liberation Sans',sans-serif;font-size:13px;font-weight:normal;font-style:normal;color:#141414;transform:scaleX(1.0273);transform-origin:0 0;">Term Loan</div><div style="position:absolute;left:1122.30px;top:648.00px;white-space:pre;line-height:1;font-family:'Liberation Sans',sans-serif;font-size:13px;font-weight:normal;font-style:normal;color:#141414;">Deferred Taxes</div><div style="position:absolute;left:1122.30px;top:668.00px;white-space:pre;line-height:1;font-family:'Liberation Sans',sans-serif;font-size:13px;font-weight:bold;font-style:normal;color:#141414;transform:scaleX(1.0590);transform-origin:0 0;">Total Liabilities</div><div style="position:absolute;left:24px;top:237px;width:36px;height:49px;background:transparent;box-sizing:border-box;border:2px solid #107c41;"></div><div style="position:absolute;left:56px;top:282px;width:5px;height:5px;background:#107c41;outline:1px solid #fff;"></div><svg style="position:absolute;left:15px;top:15px;" width="18" height="18" viewBox="0 0 18 18"><rect x="4" y="1" width="13" height="16" rx="0.8" fill="#21a366"/>
<rect x="11" y="1" width="6" height="3.8" fill="#33c481"/><rect x="4" y="4.8" width="13" height="4.4" fill="#2a9a5e"/>
<rect x="4" y="9.2" width="13" height="4" fill="#137f45"/><rect x="4" y="13.2" width="13" height="3.8" fill="#185c37"/>
<rect x="1" y="4" width="10" height="10" rx="0.8" fill="#107c41"/>
<path d="M3.6 6.3 L8.4 11.7 M8.4 6.3 L3.6 11.7" stroke="#fff" stroke-width="1.5"/></svg><div style="position:absolute;left:48.00px;top:18.04px;white-space:pre;line-height:1;font-family:'Liberation Sans',sans-serif;font-size:12px;font-weight:normal;font-style:normal;color:#242424;transform:scaleX(0.9126);transform-origin:0 0;">AutoSave</div><div style="position:absolute;left:103px;top:13px;width:45px;height:21px;background:#ffffff;box-sizing:border-box;border:1px solid #5a5a5a;border-radius:11px;"></div><svg style="position:absolute;left:106px;top:16px;" width="15" height="15" viewBox="0 0 15 15"><circle cx="7.5" cy="7.5" r="6.5" fill="#5c5c5c"/></svg><div style="position:absolute;left:126.00px;top:18.04px;white-space:pre;line-height:1;font-family:'Liberation Sans',sans-serif;font-size:12px;font-weight:normal;font-style:normal;color:#242424;transform:scaleX(0.9496);transform-origin:0 0;">Off</div><svg style="position:absolute;left:161px;top:16px;" width="16" height="16" viewBox="0 0 16 16"><path d="M0.5 0.5 H13 L15.5 3 V15.5 H0.5 Z" fill="#e3a6ec" stroke="#a935c0" stroke-width="1"/>
<rect x="3.5" y="1" width="8" height="4.5" fill="#fff" stroke="#a935c0" stroke-width="1"/>
<rect x="3.5" y="9.5" width="9" height="5.5" fill="#fff" stroke="#a935c0" stroke-width="1"/></svg><svg style="position:absolute;left:190px;top:17px;" width="16" height="16" viewBox="0 0 16 16"><path d="M2 2 V7 H7 M2.5 6.5 C5 2 12 2 13.5 7 C14.5 10 12 13 9 15" fill="none" stroke="#9c9c9c" stroke-width="1.2"/></svg><svg style="position:absolute;left:211px;top:21px;" width="8" height="5" viewBox="0 0 8 5"><path d="M0.5 0.5 L4 4 L7.5 0.5" fill="none" stroke="#a8a8a8" stroke-width="1"/></svg><svg style="position:absolute;left:229px;top:17px;" width="16" height="16" viewBox="0 0 16 16"><path d="M14 2 V7 H9 M13.5 6.5 C11 2 4 2 2.5 7 C1.5 10 4 13 7 15" fill="none" stroke="#9c9c9c" stroke-width="1.2"/></svg><svg style="position:absolute;left:250px;top:21px;" width="8" height="5" viewBox="0 0 8 5"><path d="M0.5 0.5 L4 4 L7.5 0.5" fill="none" stroke="#a8a8a8" stroke-width="1"/></svg><svg style="position:absolute;left:271px;top:20px;" width="9" height="9" viewBox="0 0 9 9"><path d="M0.5 1 H8.5" stroke="#333" stroke-width="1.2"/><path d="M1 4 L4.5 7.5 L8 4" fill="none" stroke="#333" stroke-width="1.2"/></svg><div style="position:absolute;left:305.00px;top:18.89px;white-space:pre;line-height:1;font-family:'Liberation Sans',sans-serif;font-size:12.3px;font-weight:normal;font-style:normal;color:#242424;transform:scaleX(0.9731);transform-origin:0 0;">3-Statement Compact (Comp...</div><svg style="position:absolute;left:478px;top:22px;" width="4" height="4" viewBox="0 0 4 4"><circle cx="2" cy="2" r="1.6" fill="#333"/></svg><div style="position:absolute;left:488.30px;top:18.89px;white-space:pre;line-height:1;font-family:'Liberation Sans',sans-serif;font-size:12.3px;font-weight:normal;font-style:normal;color:#242424;transform:scaleX(0.9204);transform-origin:0 0;">Saved to this PC</div><svg style="position:absolute;left:578px;top:20px;" width="10" height="6" viewBox="0 0 10 6"><path d="M0.5 0.5 L5 5 L9.5 0.5" fill="none" stroke="#333" stroke-width="1.2"/></svg><div style="position:absolute;left:622px;top:8px;width:368px;height:31px;background:#fafafa;box-sizing:border-box;border:1px solid #dedede;border-bottom-color:#c8c8c8;border-radius:5px;"></div><svg style="position:absolute;left:635px;top:17px;" width="16" height="15" viewBox="0 0 16 15"><circle cx="10" cy="5.5" r="4.6" fill="none" stroke="#5a5a5a" stroke-width="1.2"/><path d="M6.8 8.8 L1 14.5" stroke="#5a5a5a" stroke-width="1.3"/></svg><div style="position:absolute;left:664.00px;top:18.72px;white-space:pre;line-height:1;font-family:'Liberation Sans',sans-serif;font-size:12.5px;font-weight:normal;font-style:normal;color:#5f5f5f;transform:scaleX(0.9720);transform-origin:0 0;">Search</div><div style="position:absolute;left:1186px;top:12px;width:24px;height:24px;border-radius:50%;overflow:hidden;"><svg width="24" height="24" viewBox="0 0 24 24" style="position:absolute;left:0;top:0;"><rect width="24" height="24" fill="#7a6652"/><rect x="0" y="0" width="7" height="24" fill="#4d4a48"/><path d="M3 24 L4 14 Q7 11 10.5 11.5 L13.5 11.5 Q18 12 20 15 L21 24 Z" fill="#8e9094"/><path d="M10 12 L14 12 L13.5 24 L10 24 Z" fill="#f3efe6"/><path d="M14 13 L19 15 L19.5 22 L14 24Z" fill="#c49a55"/><rect x="9" y="20" width="6" height="4" fill="#d69a3c"/><ellipse cx="12.8" cy="7.6" rx="2.8" ry="3.6" fill="#d6a862"/><path d="M9.8 6 Q10.5 2.6 13 2.8 Q15.6 3 15.8 6 Q14.5 4.8 12.8 4.8 Q11 4.8 9.8 6Z" fill="#2b2622"/></svg></div><div style="position:absolute;left:1241px;top:23px;width:10px;height:1px;background:#1a1a1a;"></div><svg style="position:absolute;left:1288px;top:18px;" width="13" height="12" viewBox="0 0 13 12"><rect x="0.5" y="2.5" width="9" height="9" rx="1.5" fill="none" stroke="#1a1a1a" stroke-width="1"/><path d="M3 0.5 H10.5 Q12.5 0.5 12.5 2.5 V9" fill="none" stroke="#1a1a1a" stroke-width="1"/></svg><svg style="position:absolute;left:1336px;top:18px;" width="12" height="12" viewBox="0 0 12 12"><path d="M0.5 0.5 L11.5 11.5 M11.5 0.5 L0.5 11.5" stroke="#1a1a1a" stroke-width="1.1"/></svg><div style="position:absolute;left:22.00px;top:58.02px;white-space:pre;line-height:1;font-family:'Liberation Sans',sans-serif;font-size:12.5px;font-weight:normal;font-style:normal;color:#242424;transform:scaleX(0.9426);transform-origin:0 0;">File</div><div style="position:absolute;left:67.30px;top:58.02px;white-space:pre;line-height:1;font-family:'Liberation Sans',sans-serif;font-size:12.5px;font-weight:normal;font-style:normal;color:#1c1c1c;transform:scaleX(1.1007);transform-origin:0 0;-webkit-text-stroke:0.25px #1c1c1c;">Home</div><div style="position:absolute;left:124.00px;top:58.02px;white-space:pre;line-height:1;font-family:'Liberation Sans',sans-serif;font-size:12.5px;font-weight:normal;font-style:normal;color:#242424;transform:scaleX(1.0235);transform-origin:0 0;">Insert</div><div style="position:absolute;left:179.00px;top:58.02px;white-space:pre;line-height:1;font-family:'Liberation Sans',sans-serif;font-size:12.5px;font-weight:normal;font-style:normal;color:#242424;transform:scaleX(1.0085);transform-origin:0 0;">Page Layout</div><div style="position:absolute;left:271.70px;top:58.02px;white-space:pre;line-height:1;font-family:'Liberation Sans',sans-serif;font-size:12.5px;font-weight:normal;font-style:normal;color:#242424;transform:scaleX(1.0136);transform-origin:0 0;">Formulas</div><div style="position:absolute;left:346.00px;top:58.02px;white-space:pre;line-height:1;font-family:'Liberation Sans',sans-serif;font-size:12.5px;font-weight:normal;font-style:normal;color:#242424;">Data</div><div style="position:absolute;left:393.80px;top:58.02px;white-space:pre;line-height:1;font-family:'Liberation Sans',sans-serif;font-size:12.5px;font-weight:normal;font-style:normal;color:#242424;transform:scaleX(0.9805);transform-origin:0 0;">Review</div><div style="position:absolute;left:453.60px;top:58.02px;white-space:pre;line-height:1;font-family:'Liberation Sans',sans-serif;font-size:12.5px;font-weight:normal;font-style:normal;color:#242424;transform:scaleX(1.0195);transform-origin:0 0;">View</div><div style="position:absolute;left:502.30px;top:58.02px;white-space:pre;line-height:1;font-family:'Liberation Sans',sans-serif;font-size:12.5px;font-weight:normal;font-style:normal;color:#242424;transform:scaleX(1.0595);transform-origin:0 0;">Automate</div><div style="position:absolute;left:581.00px;top:58.02px;white-space:pre;line-height:1;font-family:'Liberation Sans',sans-serif;font-size:12.5px;font-weight:normal;font-style:normal;color:#242424;transform:scaleX(1.0382);transform-origin:0 0;">Help</div><div style="position:absolute;left:67px;top:72.5px;width:38px;height:2.5px;background:#107c41;border-radius:2px;"></div><div style="position:absolute;left:1185px;top:51px;width:90px;height:24px;background:#ffffff;box-sizing:border-box;border:1px solid #a0a0a0;border-radius:4px;"></div><svg style="position:absolute;left:1190px;top:56px;" width="13" height="13" viewBox="0 0 13 13"><path d="M1.5 1.5 H11.5 V8.5 H5 L2 11.5 V8.5 H1.5 Z" fill="none" stroke="#242424" stroke-width="1.1" stroke-linejoin="round"/></svg><div style="position:absolute;left:1206.00px;top:57.72px;white-space:pre;line-height:1;font-family:'Liberation Sans',sans-serif;font-size:12.5px;font-weight:normal;font-style:normal;color:#242424;transform:scaleX(1.0159);transform-origin:0 0;">Comments</div><div style="position:absolute;left:1283px;top:51px;width:71px;height:24px;background:#107c41;border-radius:4px;"></div><svg style="position:absolute;left:1287px;top:56px;" width="14" height="14" viewBox="0 0 14 14"><path d="M1 5.5 V12.5 H12 V9" fill="none" stroke="#fff" stroke-width="1.1"/><path d="M4 10 C4 6 7 4.5 10 4.5 V2 L13.2 5.5 L10 9 V6.7 C7.5 6.7 5.5 7.5 4 10Z" fill="none" stroke="#fff" stroke-width="1.1" stroke-linejoin="round"/></svg><div style="position:absolute;left:1304.00px;top:57.72px;white-space:pre;line-height:1;font-family:'Liberation Sans',sans-serif;font-size:12.5px;font-weight:normal;font-style:normal;color:#ffffff;transform:scaleX(0.9832);transform-origin:0 0;">Share</div><svg style="position:absolute;left:1343px;top:61px;" width="7" height="5" viewBox="0 0 7 5"><path d="M0.5 0.5 L3.5 3.5 L6.5 0.5" fill="none" stroke="#fff" stroke-width="1.2"/></svg><svg style="position:absolute;left:29px;top:86px;" width="30" height="32" viewBox="0 0 30 32"><rect x="1.9" y="5.8" width="19.6" height="23" fill="#fde6a8" stroke="#f08a12" stroke-width="1.3"/>
<rect x="3.6" y="7.4" width="16.2" height="19.8" fill="#f8f8f8"/>
<path d="M5.5 8.3 V5 H8.5 C9 1.5 13.5 1.5 14 5 H17.2 V8.3 Z" fill="#fff" stroke="#6e7276" stroke-width="1.1"/>
<rect x="14.8" y="13.6" width="13" height="16.8" fill="#fafafa" stroke="#3a3a3a" stroke-width="1.3"/></svg><div style="position:absolute;left:27.60px;top:123.02px;white-space:pre;line-height:1;font-family:'Liberation Sans',sans-serif;font-size:12.5px;font-weight:normal;font-style:normal;color:#242424;transform:scaleX(0.8571);transform-origin:0 0;">Paste</div><svg style="position:absolute;left:38px;top:142.5px;" width="6" height="5" viewBox="0 0 6 5"><path d="M0.6 0.6 L3.0 3.6 L5.4 0.6" fill="none" stroke="#333" stroke-width="1"/></svg><svg style="position:absolute;left:67px;top:84px;" width="16" height="20" viewBox="0 0 16 20"><path d="M6.4 2.5 L9 9 M11.8 2.5 L9.2 9" stroke="#444" stroke-width="1"/><path d="M9 9 L6.3 14 M9.2 9 L11.9 14" stroke="#444" stroke-width="1.1"/>
<circle cx="5.9" cy="16.1" r="1.75" fill="none" stroke="#2a86db" stroke-width="1.3"/><circle cx="12" cy="16.1" r="1.75" fill="none" stroke="#2a86db" stroke-width="1.3"/></svg><svg style="position:absolute;left:67px;top:111px;" width="18" height="18" viewBox="0 0 18 18"><path d="M8.2 1.8 V1 H1 V14.5 H7" fill="none" stroke="#333" stroke-width="1.05"/>
<path d="M7.5 4.5 H13.5 L16.8 7.8 V16.6 H7.5 Z" fill="#fff" stroke="#333" stroke-width="1.1" stroke-linejoin="round"/>
<path d="M13.2 4.5 V8 H16.8 M9.8 11.6 H14 M9.8 13.8 H14" fill="none" stroke="#444" stroke-width="0.95"/></svg><svg style="position:absolute;left:96px;top:118.3px;" width="7" height="5" viewBox="0 0 7 5"><path d="M0.6 0.6 L3.5 3.6 L6.4 0.6" fill="none" stroke="#333" stroke-width="1"/></svg><svg style="position:absolute;left:67px;top:137px;" width="18" height="17" viewBox="0 0 18 17"><path d="M1.3 7.6 L8.2 16 L13.4 10.6 L7.6 5 Z" fill="#fde6c8" stroke="#ef7b15" stroke-width="1.3" stroke-linejoin="round"/>
<path d="M4.6 9.5 L9.5 13.5 M6.5 8 L10.8 11.8" stroke="#ef7b15" stroke-width="0.9"/>
<path d="M7.8 5.2 L10.5 2.6 L16 8 L13.2 10.6" fill="#fff" stroke="#444" stroke-width="1.05" stroke-linejoin="round"/>
<path d="M12.2 5.3 L16.2 1.2 Q17.2 0.6 17.6 1.6 L13.7 5.9" fill="#fff" stroke="#444" stroke-width="1"/></svg><div style="position:absolute;left:32.60px;top:162.24px;white-space:pre;line-height:1;font-family:'Liberation Sans',sans-serif;font-size:12px;font-weight:normal;font-style:normal;color:#404040;transform:scaleX(0.9674);transform-origin:0 0;">Clipboard</div><svg style="position:absolute;left:108px;top:164px;" width="9" height="9" viewBox="0 0 9 9"><path d="M0.5 4.5 V0.5 H4.5" fill="none" stroke="#555" stroke-width="0.9"/><path d="M2.8 2.8 L7.6 7.6 M3.8 7.8 H7.8 V3.8" fill="none" stroke="#444" stroke-width="1"/></svg><div style="position:absolute;left:119px;top:83px;width:1px;height:89px;background:#d6d6d6;"></div><div style="position:absolute;left:128px;top:90px;width:123px;height:24px;background:#fff;box-sizing:border-box;border:1px solid #8a8a8a;border-radius:4px;"></div><div style="position:absolute;left:131.40px;top:95.62px;white-space:pre;line-height:1;font-family:'Liberation Sans',sans-serif;font-size:12.5px;font-weight:normal;font-style:normal;color:#1a1a1a;transform:scaleX(0.8857);transform-origin:0 0;">Open Sans</div><svg style="position:absolute;left:241px;top:100.5px;" width="7" height="5" viewBox="0 0 7 5"><path d="M0.6 0.6 L3.5 3.6 L6.4 0.6" fill="none" stroke="#333" stroke-width="1"/></svg><div style="position:absolute;left:253px;top:90px;width:43px;height:24px;background:#fff;box-sizing:border-box;border:1px solid #8a8a8a;border-radius:4px;"></div><div style="position:absolute;left:257.00px;top:95.62px;white-space:pre;line-height:1;font-family:'Liberation Sans',sans-serif;font-size:12.5px;font-weight:normal;font-style:normal;color:#1a1a1a;transform:scaleX(0.7316);transform-origin:0 0;">11</div><svg style="position:absolute;left:286px;top:100.5px;" width="7" height="5" viewBox="0 0 7 5"><path d="M0.6 0.6 L3.5 3.6 L6.4 0.6" fill="none" stroke="#333" stroke-width="1"/></svg><svg style="position:absolute;left:302px;top:93px;" width="12" height="14" viewBox="0 0 12 14"><path d="M1 13.5 L6 0.8 L11 13.5 M3 8.6 H9" fill="none" stroke="#3a3a3a" stroke-width="1.15"/></svg><svg style="position:absolute;left:313px;top:94px;" width="6" height="5" viewBox="0 0 6 5"><path d="M0.6 4 L3 1.2 L5.4 4" fill="none" stroke="#2a7fd4" stroke-width="1.1"/></svg><svg style="position:absolute;left:330px;top:97px;" width="10" height="10" viewBox="0 0 10 10"><path d="M0.8 9.7 L4.8 0.6 L8.8 9.7 M2.4 6.3 H7.2" fill="none" stroke="#3a3a3a" stroke-width="1.15"/></svg><svg style="position:absolute;left:339px;top:94px;" width="6" height="5" viewBox="0 0 6 5"><path d="M0.6 1 L3 3.8 L5.4 1" fill="none" stroke="#2a7fd4" stroke-width="1.1"/></svg><div style="position:absolute;left:136.50px;top:126.57px;white-space:pre;line-height:1;font-family:'Liberation Sans',sans-serif;font-size:13.5px;font-weight:bold;font-style:normal;color:#333;transform:scaleX(0.7692);transform-origin:0 0;">B</div><svg style="position:absolute;left:161px;top:127px;" width="10" height="12" viewBox="0 0 10 12"><path d="M4 0.8 H9.5 M0.8 11.2 H6.2 M6.8 0.8 L3.5 11.2" fill="none" stroke="#333" stroke-width="1.1"/></svg><div style="position:absolute;left:187.00px;top:125.92px;white-space:pre;line-height:1;font-family:'Liberation Sans',sans-serif;font-size:12.5px;font-weight:normal;font-style:normal;color:#333;">U</div><div style="position:absolute;left:186.5px;top:139.5px;width:10px;height:1px;background:#333;"></div><svg style="position:absolute;left:207px;top:132.5px;" width="7" height="5" viewBox="0 0 7 5"><path d="M0.6 0.6 L3.5 3.6 L6.4 0.6" fill="none" stroke="#333" stroke-width="1"/></svg><div style="position:absolute;left:221px;top:122px;width:1px;height:24px;background:#d6d6d6;"></div><svg style="position:absolute;left:227px;top:125px;" width="17" height="17" viewBox="0 0 17 17"><path d="M1 1 H15 M1 1 V14 M15 1 V14 M8 1 V14 M1 7.5 H15" fill="none" stroke="#555" stroke-width="1" stroke-dasharray="1 1"/>
<path d="M0.5 15.5 H15.5" stroke="#222" stroke-width="1.4"/></svg><svg style="position:absolute;left:251px;top:132.5px;" width="7" height="5" viewBox="0 0 7 5"><path d="M0.6 0.6 L3.5 3.6 L6.4 0.6" fill="none" stroke="#333" stroke-width="1"/></svg><div style="position:absolute;left:265px;top:122px;width:1px;height:24px;background:#d6d6d6;"></div><svg style="position:absolute;left:271px;top:124px;" width="18" height="18" viewBox="0 0 18 18"><path d="M3.5 9 L8 3 L13 7.5 L8.5 12 Z" fill="#fff" stroke="#444" stroke-width="1.1" stroke-linejoin="round"/>
<path d="M6 4.5 L5.5 1.5" stroke="#444" stroke-width="1.1"/>
<path d="M12 5 Q15 5 14.5 10" fill="none" stroke="#2a7fd4" stroke-width="1.5"/>
<rect x="1" y="13.5" width="16" height="4" fill="#f5c518"/></svg><svg style="position:absolute;left:295px;top:132.5px;" width="7" height="5" viewBox="0 0 7 5"><path d="M0.6 0.6 L3.5 3.6 L6.4 0.6" fill="none" stroke="#333" stroke-width="1"/></svg><svg style="position:absolute;left:316px;top:126px;" width="11" height="12" viewBox="0 0 11 12"><path d="M0.8 11 L5.2 0.6 L9.6 11 M2.6 7.3 H7.8" fill="none" stroke="#3a3a3a" stroke-width="1.15"/></svg><div style="position:absolute;left:313px;top:138px;width:16px;height:4px;background:#e8112d;"></div><svg style="position:absolute;left:336px;top:132.5px;" width="7" height="5" viewBox="0 0 7 5"><path d="M0.6 0.6 L3.5 3.6 L6.4 0.6" fill="none" stroke="#333" stroke-width="1"/></svg><div style="position:absolute;left:218.40px;top:162.24px;white-space:pre;line-height:1;font-family:'Liberation Sans',sans-serif;font-size:12px;font-weight:normal;font-style:normal;color:#404040;transform:scaleX(0.9660);transform-origin:0 0;">Font</div><svg style="position:absolute;left:344px;top:164px;" width="9" height="9" viewBox="0 0 9 9"><path d="M0.5 4.5 V0.5 H4.5" fill="none" stroke="#555" stroke-width="0.9"/><path d="M2.8 2.8 L7.6 7.6 M3.8 7.8 H7.8 V3.8" fill="none" stroke="#444" stroke-width="1"/></svg><div style="position:absolute;left:355px;top:83px;width:1px;height:89px;background:#d6d6d6;"></div><svg style="position:absolute;left:368px;top:93px;" width="16" height="16" viewBox="0 0 16 16"><path d="M1 1.5 H15" stroke="#333" stroke-width="1.1"/><path d="M3 5.5 H13" stroke="#333" stroke-width="1.1"/><path d="M1 9.5 H15" stroke="#333" stroke-width="1.1"/></svg><div style="position:absolute;left:390px;top:90px;width:24px;height:24px;background:#ececec;box-sizing:border-box;border:1px solid #9a9a9a;border-radius:4px;"></div><svg style="position:absolute;left:394px;top:96px;" width="16" height="16" viewBox="0 0 16 16"><path d="M1 1.5 H15" stroke="#333" stroke-width="1.1"/><path d="M3 5.5 H13" stroke="#333" stroke-width="1.1"/><path d="M1 9.5 H15" stroke="#333" stroke-width="1.1"/></svg><svg style="position:absolute;left:420px;top:100px;" width="16" height="16" viewBox="0 0 16 16"><path d="M3 1.5 H13" stroke="#333" stroke-width="1.1"/><path d="M1 5.5 H15" stroke="#333" stroke-width="1.1"/><path d="M1 9.5 H15" stroke="#333" stroke-width="1.1"/></svg><svg style="position:absolute;left:445px;top:93px;" width="20" height="17" viewBox="0 0 20 17"><text x="-0.5" y="11.5" font-family="Liberation Sans" font-size="9.5" fill="#333" transform="rotate(-50 6 7)">ab</text>
<path d="M6.5 15.5 L16.5 5.3 M12.5 5 H16.8 V9.3" fill="none" stroke="#2a7fd4" stroke-width="1.1"/></svg><svg style="position:absolute;left:468px;top:99.5px;" width="6" height="5" viewBox="0 0 6 5"><path d="M0.6 0.6 L3.0 3.6 L5.4 0.6" fill="none" stroke="#333" stroke-width="1"/></svg><svg style="position:absolute;left:489px;top:97px;" width="16" height="10" viewBox="0 0 16 10"><path d="M1 1.5 L4 5 L1 8.5" fill="none" stroke="#2a7fd4" stroke-width="1.2"/><path d="M9.3 1 V9.3 M11.3 1 V9.3 M12.3 1 H8.5 C5.5 1 5.5 5.6 8.5 5.6 H9.3" fill="#333" stroke="#333" stroke-width="1"/></svg><svg style="position:absolute;left:512px;top:99.5px;" width="6" height="5" viewBox="0 0 6 5"><path d="M0.6 0.6 L3.0 3.6 L5.4 0.6" fill="none" stroke="#333" stroke-width="1"/></svg><svg style="position:absolute;left:368px;top:125px;" width="16" height="16" viewBox="0 0 16 16"><path d="M1 2.5 H15" stroke="#333" stroke-width="1.1"/><path d="M1 6.5 H11" stroke="#333" stroke-width="1.1"/><path d="M1 10.5 H15" stroke="#333" stroke-width="1.1"/><path d="M1 14.5 H11" stroke="#333" stroke-width="1.1"/></svg><svg style="position:absolute;left:394px;top:125px;" width="16" height="16" viewBox="0 0 16 16"><path d="M1 2.5 H15" stroke="#333" stroke-width="1.1"/><path d="M3 6.5 H13" stroke="#333" stroke-width="1.1"/><path d="M1 10.5 H15" stroke="#333" stroke-width="1.1"/><path d="M3 14.5 H13" stroke="#333" stroke-width="1.1"/></svg><svg style="position:absolute;left:420px;top:125px;" width="16" height="16" viewBox="0 0 16 16"><path d="M1 2.5 H15" stroke="#333" stroke-width="1.1"/><path d="M5 6.5 H15" stroke="#333" stroke-width="1.1"/><path d="M1 10.5 H15" stroke="#333" stroke-width="1.1"/><path d="M5 14.5 H15" stroke="#333" stroke-width="1.1"/></svg><svg style="position:absolute;left:446px;top:125px;" width="16" height="16" viewBox="0 0 16 16"><path d="M1 2.5 H15 M7 6.5 H15 M7 10.5 H15 M1 14.5 H15" stroke="#333" stroke-width="1.1"/>
<path d="M5 8.5 H1 M3 6.5 L1 8.5 L3 10.5" fill="none" stroke="#2a7fd4" stroke-width="1.1"/></svg><svg style="position:absolute;left:472px;top:125px;" width="16" height="16" viewBox="0 0 16 16"><path d="M1 2.5 H15 M7 6.5 H15 M7 10.5 H15 M1 14.5 H15" stroke="#333" stroke-width="1.1"/>
<path d="M1 8.5 H5 M3 6.5 L5 8.5 L3 10.5" fill="none" stroke="#2a7fd4" stroke-width="1.1"/></svg><div style="position:absolute;left:529px;top:89px;width:1px;height:62px;background:#d6d6d6;"></div><svg style="position:absolute;left:541px;top:94px;" width="18" height="17" viewBox="0 0 18 17"><text x="1" y="7.5" font-family="Liberation Sans" font-size="9" fill="#333" letter-spacing="0.6">ab</text>
<text x="1" y="14.5" font-family="Liberation Sans" font-size="9" fill="#333">c</text>
<path d="M15.8 7.5 Q16.8 11.8 12 12.2 H7.6 M10 9.8 L7.6 12.2 L10 14.6" fill="none" stroke="#2a7fd4" stroke-width="1.2"/></svg><svg style="position:absolute;left:540px;top:126px;" width="16" height="15" viewBox="0 0 16 15"><rect x="0.5" y="0.5" width="14" height="14" fill="#fff" stroke="#333" stroke-width="1"/>
<path d="M7.5 0.5 V3.5 M7.5 11.5 V14.5 M0.5 12.5 H14.5" stroke="#333" stroke-width="1"/>
<rect x="0.5" y="3.5" width="14" height="8" fill="#fff" stroke="#2a7fd4" stroke-width="1.1"/>
<path d="M2.8 7.5 H12.2 M5 5.5 L2.8 7.5 L5 9.5 M10 5.5 L12.2 7.5 L10 9.5" fill="none" stroke="#2a7fd4" stroke-width="1.1"/></svg><svg style="position:absolute;left:568px;top:132.0px;" width="7" height="5" viewBox="0 0 7 5"><path d="M0.6 0.6 L3.5 3.6 L6.4 0.6" fill="none" stroke="#333" stroke-width="1"/></svg><div style="position:absolute;left:439.30px;top:162.24px;white-space:pre;line-height:1;font-family:'Liberation Sans',sans-serif;font-size:12px;font-weight:normal;font-style:normal;color:#404040;transform:scaleX(0.9817);transform-origin:0 0;">Alignment</div><svg style="position:absolute;left:580px;top:164px;" width="9" height="9" viewBox="0 0 9 9"><path d="M0.5 4.5 V0.5 H4.5" fill="none" stroke="#555" stroke-width="0.9"/><path d="M2.8 2.8 L7.6 7.6 M3.8 7.8 H7.8 V3.8" fill="none" stroke="#444" stroke-width="1"/></svg><div style="position:absolute;left:591px;top:83px;width:1px;height:89px;background:#d6d6d6;"></div><div style="position:absolute;left:600px;top:90px;width:146px;height:24px;background:#fff;box-sizing:border-box;border:1px solid #8a8a8a;border-radius:4px;"></div><div style="position:absolute;left:603.00px;top:95.62px;white-space:pre;line-height:1;font-family:'Liberation Sans',sans-serif;font-size:12.5px;font-weight:normal;font-style:normal;color:#1a1a1a;transform:scaleX(0.8924);transform-origin:0 0;">General</div><svg style="position:absolute;left:736px;top:100.5px;" width="7" height="5" viewBox="0 0 7 5"><path d="M0.6 0.6 L3.5 3.6 L6.4 0.6" fill="none" stroke="#333" stroke-width="1"/></svg><svg style="position:absolute;left:607px;top:126px;" width="9" height="17" viewBox="0 0 9 17"><path d="M7.6 4.2 C7 2.2 1.3 2 1.2 4.8 C1.1 8 7.8 7.6 7.8 11 C7.8 14.2 1.8 14.4 1 12" fill="none" stroke="#333" stroke-width="1.05"/><path d="M4.4 0.5 V16" stroke="#333" stroke-width="1.05"/></svg><svg style="position:absolute;left:627px;top:132.5px;" width="6" height="5" viewBox="0 0 6 5"><path d="M0.6 0.6 L3.0 3.6 L5.4 0.6" fill="none" stroke="#333" stroke-width="1"/></svg><svg style="position:absolute;left:645px;top:126px;" width="16" height="16" viewBox="0 0 16 16"><circle cx="3.4" cy="3.8" r="2.6" fill="none" stroke="#333" stroke-width="1.05"/><circle cx="12.2" cy="11.8" r="2.6" fill="none" stroke="#333" stroke-width="1.05"/><path d="M12.8 1 L2.6 15" stroke="#333" stroke-width="1.05"/></svg><svg style="position:absolute;left:675px;top:128px;" width="9" height="13" viewBox="0 0 9 13"><path d="M4.6 0.8 C7.2 0.8 8.4 2.6 8.4 4.6 C8.4 8 5.6 10.8 1.2 12.2 L0.8 11.2 C3 10.2 4.4 9 4.8 7.8 C2.6 7.8 1 6.4 1 4.3 C1 2.2 2.6 0.8 4.6 0.8Z" fill="#333"/></svg><div style="position:absolute;left:693px;top:122px;width:1px;height:24px;background:#d6d6d6;"></div><svg style="position:absolute;left:699px;top:125px;" width="18" height="18" viewBox="0 0 18 18"><path d="M1.5 5.8 H9.5 M4.5 2.8 L1.5 5.8 L4.5 8.8" fill="none" stroke="#2a7fd4" stroke-width="1.2"/>
<text x="10.5" y="7.3" font-family="Liberation Sans" font-size="8.6" fill="#333">0</text>
<text x="2.6" y="16" font-family="Liberation Sans" font-size="8.6" fill="#333">.00</text></svg><svg style="position:absolute;left:725px;top:125px;" width="18" height="18" viewBox="0 0 18 18"><text x="3.4" y="7.3" font-family="Liberation Sans" font-size="8.6" fill="#333">.00</text>
<path d="M1.5 12.5 H9.5 M6.5 9.5 L9.5 12.5 L6.5 15.5" fill="none" stroke="#2a7fd4" stroke-width="1.2"/>
<text x="8.5" y="16" font-family="Liberation Sans" font-size="8.6" fill="#333">.0</text></svg><div style="position:absolute;left:644.70px;top:162.24px;white-space:pre;line-height:1;font-family:'Liberation Sans',sans-serif;font-size:12px;font-weight:normal;font-style:normal;color:#404040;transform:scaleX(0.9417);transform-origin:0 0;">Number</div><svg style="position:absolute;left:741px;top:164px;" width="9" height="9" viewBox="0 0 9 9"><path d="M0.5 4.5 V0.5 H4.5" fill="none" stroke="#555" stroke-width="0.9"/><path d="M2.8 2.8 L7.6 7.6 M3.8 7.8 H7.8 V3.8" fill="none" stroke="#444" stroke-width="1"/></svg><div style="position:absolute;left:753px;top:83px;width:1px;height:89px;background:#d6d6d6;"></div><svg style="position:absolute;left:766px;top:87px;" width="17" height="15" viewBox="0 0 17 15"><rect x="0.5" y="0.5" width="15" height="13" fill="#fff" stroke="#444" stroke-width="1"/>
<path d="M0.5 4.5 H15.5 M0.5 9.5 H15.5 M3.5 0.5 V13.5 M9.5 0.5 V13.5 M12.5 0.5 V13.5" stroke="#444" stroke-width="1"/>
<rect x="3.5" y="0.5" width="6" height="4" fill="#f7a0ad" stroke="#e23b34" stroke-width="1"/>
<rect x="3.5" y="9.5" width="7.5" height="4" fill="#f7a0ad" stroke="#e23b34" stroke-width="1"/>
<rect x="4" y="5" width="3" height="4" fill="#2a7fd4"/></svg><div style="position:absolute;left:786.00px;top:88.79px;white-space:pre;line-height:1;font-family:'Liberation Sans',sans-serif;font-size:12.3px;font-weight:normal;font-style:normal;color:#242424;">Conditional Formatting</div><svg style="position:absolute;left:913.5px;top:92.5px;" width="7" height="5" viewBox="0 0 7 5"><path d="M0.6 0.6 L3.5 3.6 L6.4 0.6" fill="none" stroke="#333" stroke-width="1"/></svg><svg style="position:absolute;left:766px;top:113px;" width="17" height="15" viewBox="0 0 17 15"><path d="M0.5 13.5 V0.5 H15.5 V8 M0.5 4.5 H15.5 M0.5 9.5 H4 M4 0.5 V13 M10 0.5 V4.5" fill="none" stroke="#444" stroke-width="1"/>
<rect x="5" y="4.5" width="10.5" height="9" fill="#a9d5f7" stroke="#2a7fd4" stroke-width="1" stroke-dasharray="2 1"/>
<path d="M6.5 12 L14.8 3.5 L16.4 5 L8 13.5 Z" fill="#fff" stroke="#444" stroke-width="0.9"/>
<path d="M3 14.8 Q3.5 11.5 6.2 11.6 L7.8 13.2 Q7 15.5 3 14.8Z" fill="#2a7fd4"/></svg><div style="position:absolute;left:786.00px;top:114.59px;white-space:pre;line-height:1;font-family:'Liberation Sans',sans-serif;font-size:12.3px;font-weight:normal;font-style:normal;color:#242424;transform:scaleX(0.9391);transform-origin:0 0;">Format as Table</div><svg style="position:absolute;left:871.5px;top:118.5px;" width="7" height="5" viewBox="0 0 7 5"><path d="M0.6 0.6 L3.5 3.6 L6.4 0.6" fill="none" stroke="#333" stroke-width="1"/></svg><svg style="position:absolute;left:766px;top:139px;" width="17" height="15" viewBox="0 0 17 15"><rect x="0.5" y="0.5" width="15" height="13" fill="#fff" stroke="#444" stroke-width="1"/>
<rect x="3" y="3" width="10" height="9" fill="#a9d5f7" stroke="#2a7fd4" stroke-width="1"/>
<path d="M6.5 12 L14.8 3.5 L16.4 5 L8 13.5 Z" fill="#fff" stroke="#444" stroke-width="0.9"/>
<path d="M3 14.8 Q3.5 11.5 6.2 11.6 L7.8 13.2 Q7 15.5 3 14.8Z" fill="#2a7fd4"/></svg><div style="position:absolute;left:786.00px;top:140.39px;white-space:pre;line-height:1;font-family:'Liberation Sans',sans-serif;font-size:12.3px;font-weight:normal;font-style:normal;color:#242424;transform:scaleX(0.9123);transform-origin:0 0;">Cell Styles</div><svg style="position:absolute;left:843px;top:144.5px;" width="7" height="5" viewBox="0 0 7 5"><path d="M0.6 0.6 L3.5 3.6 L6.4 0.6" fill="none" stroke="#333" stroke-width="1"/></svg><div style="position:absolute;left:831.70px;top:162.24px;white-space:pre;line-height:1;font-family:'Liberation Sans',sans-serif;font-size:12px;font-weight:normal;font-style:normal;color:#404040;transform:scaleX(0.8474);transform-origin:0 0;">Styles</div><div style="position:absolute;left:937px;top:83px;width:1px;height:89px;background:#d6d6d6;"></div><svg style="position:absolute;left:950px;top:87px;" width="17" height="15" viewBox="0 0 17 15"><rect x="0.5" y="0.5" width="15" height="13" fill="#fff" stroke="#444" stroke-width="1"/>
<path d="M0.5 4 H15.5 M0.5 9.5 H15.5 M5.5 0.5 V13.5 M10.5 0.5 V13.5" stroke="#444" stroke-width="1"/>
<rect x="6" y="4" width="9.5" height="5.5" fill="#a9d5f7" stroke="#2a7fd4" stroke-width="1.1"/>
<path d="M9.5 6.8 H1.2 M4 4 L1.2 6.8 L4 9.6" fill="none" stroke="#2a7fd4" stroke-width="1.2"/></svg><div style="position:absolute;left:969.50px;top:88.99px;white-space:pre;line-height:1;font-family:'Liberation Sans',sans-serif;font-size:12.3px;font-weight:normal;font-style:normal;color:#242424;transform:scaleX(0.9426);transform-origin:0 0;">Insert</div><svg style="position:absolute;left:1016px;top:92.5px;" width="7" height="5" viewBox="0 0 7 5"><path d="M0.6 0.6 L3.5 3.6 L6.4 0.6" fill="none" stroke="#333" stroke-width="1"/></svg><svg style="position:absolute;left:950px;top:113px;" width="17" height="15" viewBox="0 0 17 15"><path d="M0.5 3.5 V0.5 H15.5 V3.5 M0.5 10 V13.5 H15.5 V10 M0.5 4 H15.5 M0.5 9.5 H15.5 M5.5 0.5 V4 M10.5 0.5 V4 M5.5 9.5 V13.5 M10.5 9.5 V13.5" fill="none" stroke="#444" stroke-width="1"/>
<rect x="3.5" y="4" width="5.5" height="5.5" fill="#a9d5f7" stroke="#2a7fd4" stroke-width="1.1"/>
<path d="M10.5 4.3 L15.5 9.3 M15.5 4.3 L10.5 9.3" stroke="#e8402f" stroke-width="1.2"/></svg><div style="position:absolute;left:969.50px;top:114.59px;white-space:pre;line-height:1;font-family:'Liberation Sans',sans-serif;font-size:12.3px;font-weight:normal;font-style:normal;color:#242424;transform:scaleX(0.9284);transform-origin:0 0;">Delete</div><svg style="position:absolute;left:1020px;top:118.5px;" width="7" height="5" viewBox="0 0 7 5"><path d="M0.6 0.6 L3.5 3.6 L6.4 0.6" fill="none" stroke="#333" stroke-width="1"/></svg><svg style="position:absolute;left:950px;top:138px;" width="17" height="17" viewBox="0 0 17 17"><path d="M3.5 0.8 V3.2 M12.5 0.8 V3.2 M3.5 2 H12.5" fill="none" stroke="#2a7fd4" stroke-width="1.1"/>
<path d="M0.5 4.5 V16.5 H15.5 V4.5 M0.5 8 H15.5 M0.5 13 H15.5 M4.5 4.5 V16.5 M11.5 4.5 V16.5" fill="none" stroke="#444" stroke-width="1"/>
<rect x="4.5" y="8" width="7" height="5" fill="#a9d5f7" stroke="#2a7fd4" stroke-width="1.1"/></svg><div style="position:absolute;left:969.50px;top:141.19px;white-space:pre;line-height:1;font-family:'Liberation Sans',sans-serif;font-size:12.3px;font-weight:normal;font-style:normal;color:#242424;transform:scaleX(0.9755);transform-origin:0 0;">Format</div><svg style="position:absolute;left:1012px;top:144.5px;" width="7" height="5" viewBox="0 0 7 5"><path d="M0.6 0.6 L3.5 3.6 L6.4 0.6" fill="none" stroke="#333" stroke-width="1"/></svg><div style="position:absolute;left:979.50px;top:162.24px;white-space:pre;line-height:1;font-family:'Liberation Sans',sans-serif;font-size:12px;font-weight:normal;font-style:normal;color:#404040;transform:scaleX(0.8661);transform-origin:0 0;">Cells</div><div style="position:absolute;left:1043px;top:83px;width:1px;height:89px;background:#d6d6d6;"></div><svg style="position:absolute;left:1056px;top:88px;" width="15" height="14" viewBox="0 0 15 14"><path d="M14 2.5 V0.8 H1 L7 7 L1 13.2 H14 V11.5" fill="none" stroke="#333" stroke-width="1.1"/></svg><svg style="position:absolute;left:1084px;top:92.5px;" width="7" height="5" viewBox="0 0 7 5"><path d="M0.6 0.6 L3.5 3.6 L6.4 0.6" fill="none" stroke="#333" stroke-width="1"/></svg><svg style="position:absolute;left:1055px;top:112px;" width="17" height="15" viewBox="0 0 17 15"><rect x="0.5" y="0.5" width="15.5" height="13.5" fill="#fff" stroke="#333" stroke-width="1"/>
<path d="M0.5 3 H16" stroke="#333" stroke-width="1"/>
<path d="M8.2 5 V11.5 M5.7 9 L8.2 11.5 L10.7 9" fill="none" stroke="#2a7fd4" stroke-width="1.2"/></svg><svg style="position:absolute;left:1077px;top:118.5px;" width="7" height="5" viewBox="0 0 7 5"><path d="M0.6 0.6 L3.5 3.6 L6.4 0.6" fill="none" stroke="#333" stroke-width="1"/></svg><svg style="position:absolute;left:1055px;top:138px;" width="17" height="16" viewBox="0 0 17 16"><path d="M1 10 L10 1 L16 7 L7 16 Z" fill="#f0c4f5" stroke="#a53fbd" stroke-width="1.1" stroke-linejoin="round"/>
<path d="M1 10 L4 7 L10 13 L7 16 Z" fill="#c054d4" stroke="#a53fbd" stroke-width="1.1" stroke-linejoin="round"/></svg><svg style="position:absolute;left:1077px;top:144.5px;" width="7" height="5" viewBox="0 0 7 5"><path d="M0.6 0.6 L3.5 3.6 L6.4 0.6" fill="none" stroke="#333" stroke-width="1"/></svg><svg style="position:absolute;left:1107px;top:87px;" width="31" height="28" viewBox="0 0 31 28"><text x="0.5" y="11.5" font-family="Liberation Sans" font-size="13" fill="#2a7fd4">A</text>
<text x="1" y="26.5" font-family="Liberation Sans" font-size="13" fill="#333">Z</text>
<path d="M12 7.5 H29.5 L23 15 V22.5 L19 22.5 V15 Z" fill="#fff" stroke="#333" stroke-width="1.1" stroke-linejoin="round"/></svg><div style="position:absolute;left:1105.60px;top:122.19px;white-space:pre;line-height:1;font-family:'Liberation Sans',sans-serif;font-size:12.3px;font-weight:normal;font-style:normal;color:#242424;transform:scaleX(0.9774);transform-origin:0 0;">Sort &amp;</div><div style="position:absolute;left:1104.00px;top:137.79px;white-space:pre;line-height:1;font-family:'Liberation Sans',sans-serif;font-size:12.3px;font-weight:normal;font-style:normal;color:#242424;transform:scaleX(1.0612);transform-origin:0 0;">Filter</div><svg style="position:absolute;left:1134px;top:142.0px;" width="6" height="5" viewBox="0 0 6 5"><path d="M0.6 0.6 L3.0 3.6 L5.4 0.6" fill="none" stroke="#333" stroke-width="1"/></svg><svg style="position:absolute;left:1153px;top:86px;" width="31" height="31" viewBox="0 0 31 31"><circle cx="20" cy="9.5" r="7.8" fill="none" stroke="#333" stroke-width="1.1"/><path d="M14.2 15 L1.5 28" stroke="#333" stroke-width="1.1"/></svg><div style="position:absolute;left:1151.00px;top:122.19px;white-space:pre;line-height:1;font-family:'Liberation Sans',sans-serif;font-size:12.3px;font-weight:normal;font-style:normal;color:#242424;transform:scaleX(1.0071);transform-origin:0 0;">Find &amp;</div><div style="position:absolute;left:1148.00px;top:137.79px;white-space:pre;line-height:1;font-family:'Liberation Sans',sans-serif;font-size:12.3px;font-weight:normal;font-style:normal;color:#242424;transform:scaleX(0.8892);transform-origin:0 0;">Select</div><svg style="position:absolute;left:1182px;top:142.0px;" width="6" height="5" viewBox="0 0 6 5"><path d="M0.6 0.6 L3.0 3.6 L5.4 0.6" fill="none" stroke="#333" stroke-width="1"/></svg><div style="position:absolute;left:1104.40px;top:162.24px;white-space:pre;line-height:1;font-family:'Liberation Sans',sans-serif;font-size:12px;font-weight:normal;font-style:normal;color:#404040;transform:scaleX(0.9699);transform-origin:0 0;">Editing</div><div style="position:absolute;left:1200px;top:83px;width:1px;height:89px;background:#d6d6d6;"></div><svg style="position:absolute;left:1217px;top:87px;" width="30" height="28" viewBox="0 0 30 28"><rect x="1" y="1" width="27.5" height="26" fill="none" stroke="#e0422d" stroke-width="1.4"/>
<rect x="4" y="4" width="10" height="9.5" fill="none" stroke="#e0422d" stroke-width="1.2"/><rect x="16" y="4" width="9.5" height="9.5" fill="none" stroke="#e0422d" stroke-width="1.2"/>
<rect x="4" y="15.5" width="10" height="9" fill="none" stroke="#e0422d" stroke-width="1.2"/><rect x="16" y="15.5" width="9.5" height="9" fill="none" stroke="#e0422d" stroke-width="1.2"/></svg><div style="position:absolute;left:1211.00px;top:122.19px;white-space:pre;line-height:1;font-family:'Liberation Sans',sans-serif;font-size:12.3px;font-weight:normal;font-style:normal;color:#242424;transform:scaleX(0.9927);transform-origin:0 0;">Add-ins</div><div style="position:absolute;left:1211.80px;top:162.24px;white-space:pre;line-height:1;font-family:'Liberation Sans',sans-serif;font-size:12px;font-weight:normal;font-style:normal;color:#404040;transform:scaleX(0.9684);transform-origin:0 0;">Add-ins</div><div style="position:absolute;left:1263px;top:83px;width:1px;height:89px;background:#d6d6d6;"></div><svg style="position:absolute;left:1280px;top:86px;" width="31" height="30" viewBox="0 0 31 30"><rect x="1" y="1.5" width="27.5" height="26.5" fill="#fff" stroke="#333" stroke-width="1.1"/>
<rect x="1" y="1.5" width="27.5" height="3.2" fill="#9a9a9a"/>
<path d="M1 12 H28.5 M1 20 H28.5 M8 4.7 V28 M15 4.7 V28 M22 4.7 V28" stroke="#888" stroke-width="0.9"/>
<circle cx="14" cy="12.5" r="7.5" fill="#fff" stroke="#333" stroke-width="1.3"/>
<rect x="10" y="11" width="2.2" height="5" fill="#555"/><rect x="13" y="8.5" width="2.2" height="7.5" fill="#2a7fd4"/><rect x="16" y="10" width="2.2" height="6" fill="#555"/>
<path d="M19.5 18 L28.5 28" stroke="#333" stroke-width="1.5"/></svg><div style="position:absolute;left:1274.00px;top:122.19px;white-space:pre;line-height:1;font-family:'Liberation Sans',sans-serif;font-size:12.3px;font-weight:normal;font-style:normal;color:#242424;transform:scaleX(0.9371);transform-origin:0 0;">Analyze</div><div style="position:absolute;left:1283.40px;top:137.79px;white-space:pre;line-height:1;font-family:'Liberation Sans',sans-serif;font-size:12.3px;font-weight:normal;font-style:normal;color:#242424;transform:scaleX(0.8928);transform-origin:0 0;">Data</div><div style="position:absolute;left:1325px;top:83px;width:1px;height:89px;background:#d6d6d6;"></div><svg style="position:absolute;left:1338.5px;top:163.0px;" width="10" height="5" viewBox="0 0 10 5"><path d="M0.6 0.6 L5.0 3.6 L9.4 0.6" fill="none" stroke="#333" stroke-width="1"/></svg><div style="position:absolute;left:8px;top:186px;width:102px;height:26px;background:#fff;box-sizing:border-box;border:1px solid #d4d4d4;border-radius:4px;"></div><div style="position:absolute;left:15.20px;top:194.42px;white-space:pre;line-height:1;font-family:'Liberation Sans',sans-serif;font-size:12.5px;font-weight:normal;font-style:normal;color:#1a1a1a;transform:scaleX(0.8825);transform-origin:0 0;">A1</div><svg style="position:absolute;left:94px;top:198px;" width="10" height="6" viewBox="0 0 10 6"><path d="M0.6 0.6 L5 5 L9.4 0.6" fill="none" stroke="#333" stroke-width="1.2"/></svg><svg style="position:absolute;left:118px;top:193px;" width="4" height="12" viewBox="0 0 4 12"><circle cx="2" cy="1.6" r="1.3" fill="#222"/><circle cx="2" cy="6" r="1.3" fill="#222"/><circle cx="2" cy="10.4" r="1.3" fill="#222"/></svg><div style="position:absolute;left:130px;top:186px;width:86px;height:26px;background:#fff;box-sizing:border-box;border:1px solid #d4d4d4;border-radius:4px;"></div><svg style="position:absolute;left:137px;top:193px;" width="12" height="12" viewBox="0 0 12 12"><path d="M0.5 0.5 L11.5 11.5 M11.5 0.5 L0.5 11.5" stroke="#a8a8a8" stroke-width="1.1"/></svg><svg style="position:absolute;left:158px;top:193px;" width="17" height="12" viewBox="0 0 17 12"><path d="M0.6 7 L5.5 11.4 L16.4 0.6" fill="none" stroke="#a8a8a8" stroke-width="1.1"/></svg><div style="position:absolute;left:183.50px;top:191.88px;white-space:pre;line-height:1;font-family:'Liberation Serif',sans-serif;font-size:15.5px;font-weight:normal;font-style:italic;color:#222;transform:scaleX(1.3408);transform-origin:0 0;">fx</div><svg style="position:absolute;left:203px;top:197px;" width="10" height="6" viewBox="0 0 10 6"><path d="M0.6 0.6 L5 5 L9.4 0.6" fill="none" stroke="#777" stroke-width="1"/></svg><div style="position:absolute;left:220px;top:186px;width:1138px;height:26px;background:#fff;box-sizing:border-box;border:1px solid #d4d4d4;border-radius:4px;"></div><svg style="position:absolute;left:1343px;top:195px;" width="11" height="6" viewBox="0 0 11 6"><path d="M0.6 0.6 L5.5 5 L10.4 0.6" fill="none" stroke="#333" stroke-width="1.2"/></svg><svg style="position:absolute;left:60px;top:239px;" width="200" height="46" viewBox="0 0 200 46"><g stroke="#fff" stroke-width="10.5" stroke-linecap="round">
<path d="M16.5 33 L25.5 18.5"/><path d="M32 33 L43 15.5"/><path d="M47.5 33 L59 11.5"/></g></svg><div style="position:absolute;left:130.00px;top:247.18px;white-space:pre;line-height:1;font-family:'Liberation Sans',sans-serif;font-size:15.5px;font-weight:bold;font-style:normal;color:#ffffff;transform:scaleX(1.0664);transform-origin:0 0;">Corporate</div><div style="position:absolute;left:130.00px;top:263.08px;white-space:pre;line-height:1;font-family:'Liberation Sans',sans-serif;font-size:15.5px;font-weight:normal;font-style:normal;color:#ffffff;transform:scaleX(1.0727);transform-origin:0 0;">Finance Institute</div><svg style="position:absolute;left:252px;top:272px;" width="4" height="4" viewBox="0 0 4 4"><circle cx="2" cy="2" r="1.7" fill="#b8bcc8"/></svg><div style="position:absolute;left:1344px;top:219px;width:22px;height:455px;background:#f0f0f0;"></div><div style="position:absolute;left:1346px;top:219px;width:18px;height:454px;background:#f7f7f7;border-radius:9px;"></div><svg style="position:absolute;left:1350px;top:224px;" width="11" height="7" viewBox="0 0 11 7"><polygon points="5.5,0.5 10.5,6.5 0.5,6.5" fill="#8a8a8a"/></svg><div style="position:absolute;left:1351px;top:236px;width:9.5px;height:224px;background:#777777;border-radius:5px;"></div><svg style="position:absolute;left:1350px;top:665px;" width="11" height="7" viewBox="0 0 11 7"><polygon points="0.5,0.5 10.5,0.5 5.5,6.5" fill="#8a8a8a"/></svg><div style="position:absolute;left:1343px;top:238px;width:1px;height:436px;background:#e2e2e2;"></div><div style="position:absolute;left:1342px;top:484px;width:1.5px;height:7px;background:#1a7c1a;"></div><div style="position:absolute;left:1341px;top:484px;width:3px;height:1px;background:#333;"></div><div style="position:absolute;left:1342px;top:502px;width:2px;height:2px;background:#111;"></div><div style="position:absolute;left:1342px;top:663px;width:1.5px;height:8px;background:#1a7c1a;"></div><div style="position:absolute;left:0px;top:674px;width:1366px;height:32px;background:#ffffff;"></div><div style="position:absolute;left:0px;top:674px;width:180px;height:32px;background:#f0f0f0;box-sizing:border-box;border-top:1px solid #dcdcdc;border-right:1px solid #e2e2e2;border-top-right-radius:7px;"></div><div style="position:absolute;left:234px;top:674px;width:1132px;height:32px;background:#f0f0f0;box-sizing:border-box;border-top:1px solid #dcdcdc;border-left:1px solid #e2e2e2;border-top-left-radius:7px;"></div><svg style="position:absolute;left:28px;top:685px;" width="8" height="11" viewBox="0 0 8 11"><path d="M6.5 0.6 L1 5.5 L6.5 10.4" fill="none" stroke="#a8a8a8" stroke-width="1.1"/></svg><svg style="position:absolute;left:60px;top:685px;" width="8" height="11" viewBox="0 0 8 11"><path d="M1 0.6 L6.5 5.5 L1 10.4" fill="none" stroke="#a8a8a8" stroke-width="1.1"/></svg><div style="position:absolute;left:124.00px;top:683.60px;white-space:pre;line-height:1;font-family:'Liberation Sans',sans-serif;font-size:13px;font-weight:normal;font-style:normal;color:#242424;transform:scaleX(1.0119);transform-origin:0 0;">Cover</div><div style="position:absolute;left:173px;top:683px;width:1px;height:14px;background:#c8c8c8;"></div><div style="position:absolute;left:178px;top:674px;width:58px;height:28px;background:#ffffff;border-radius:0 0 6px 6px;box-shadow:0 1px 1.5px rgba(0,0,0,0.16);"></div><div style="position:absolute;left:0px;top:702px;width:1366px;height:4px;background:#f0f0f0;"></div><div style="position:absolute;left:178px;top:698px;width:58px;height:4px;background:#ffffff;border-radius:0 0 6px 6px;box-shadow:0 1px 1.5px rgba(0,0,0,0.16);"></div><div style="position:absolute;left:186.00px;top:681.27px;white-space:pre;line-height:1;font-family:'Liberation Sans',sans-serif;font-size:13.5px;font-weight:normal;font-style:normal;color:#1c1c1c;transform:scaleX(1.0875);transform-origin:0 0;-webkit-text-stroke:0.45px #1c1c1c;">Model</div><div style="position:absolute;left:186px;top:697px;width:41px;height:2px;background:#107c41;border-radius:1px;"></div><div style="position:absolute;left:239px;top:683px;width:1px;height:14px;background:#c8c8c8;"></div><svg style="position:absolute;left:281px;top:683px;" width="12" height="12" viewBox="0 0 12 12"><path d="M6 0.5 V11.5 M0.5 6 H11.5" stroke="#333" stroke-width="1.1"/></svg><svg style="position:absolute;left:819px;top:685px;" width="5" height="13" viewBox="0 0 5 13"><circle cx="2.5" cy="1.6" r="1.3" fill="#333"/><circle cx="2.5" cy="6" r="1.3" fill="#333"/><circle cx="2.5" cy="10.4" r="1.3" fill="#333"/></svg><div style="position:absolute;left:838px;top:681px;width:508px;height:18px;background:#f8f8f8;border-radius:9px;"></div><svg style="position:absolute;left:842px;top:686px;" width="8" height="9" viewBox="0 0 8 9"><polygon points="7.5,0.5 7.5,8.5 0.5,4.5" fill="#888"/></svg><div style="position:absolute;left:855px;top:685px;width:293px;height:9.5px;background:#777777;border-radius:5px;"></div><svg style="position:absolute;left:1335px;top:686px;" width="8" height="9" viewBox="0 0 8 9"><polygon points="0.5,0.5 0.5,8.5 7.5,4.5" fill="#888"/></svg><div style="position:absolute;left:0px;top:706px;width:1366px;height:22px;background:#f4f4f4;"></div><div style="position:absolute;left:0px;top:706px;width:1366px;height:1px;background:#fbfbfb;"></div><div style="position:absolute;left:10.20px;top:712.34px;white-space:pre;line-height:1;font-family:'Liberation Sans',sans-serif;font-size:12px;font-weight:normal;font-style:normal;color:#242424;transform:scaleX(0.8822);transform-origin:0 0;">Ready</div><svg style="position:absolute;left:61px;top:709px;" width="16" height="16" viewBox="0 0 16 16"><circle cx="6.5" cy="2.6" r="1.8" fill="none" stroke="#333" stroke-width="1"/>
<path d="M1 5.5 L6.5 6.8 L12 5.5 M6.5 6.8 V10 L3 15 M6.5 10 L8 12" fill="none" stroke="#333" stroke-width="1"/>
<path d="M9.5 11 L14.5 15.5 M14.5 11 L9.5 15.5" stroke="#333" stroke-width="1.1"/></svg><div style="position:absolute;left:80.00px;top:712.14px;white-space:pre;line-height:1;font-family:'Liberation Sans',sans-serif;font-size:12px;font-weight:normal;font-style:normal;color:#242424;transform:scaleX(0.9380);transform-origin:0 0;">Accessibility: Investigate</div><div style="position:absolute;left:1066px;top:706px;width:40px;height:22px;background:#dadada;"></div><svg style="position:absolute;left:1079px;top:710px;" width="13" height="13" viewBox="0 0 13 13"><rect x="0.65" y="0.65" width="11.7" height="11.7" fill="none" stroke="#222" stroke-width="1.3"/><path d="M4.5 0.6 V12.4 M8.5 0.6 V12.4 M0.6 4.5 H12.4 M0.6 8.5 H12.4" stroke="#222" stroke-width="1.2"/></svg><svg style="position:absolute;left:1119px;top:710px;" width="14" height="13" viewBox="0 0 14 13"><rect x="0.65" y="0.65" width="12.7" height="11.7" fill="none" stroke="#222" stroke-width="1.3"/><rect x="3.6" y="2.6" width="6.8" height="7.8" fill="none" stroke="#222" stroke-width="1.2"/><path d="M5.2 4.8 H8.8 M5.2 6.5 H8.8 M5.2 8.2 H8.8" stroke="#222" stroke-width="1"/></svg><svg style="position:absolute;left:1159px;top:710px;" width="14" height="13" viewBox="0 0 14 13"><rect x="0.65" y="0.65" width="12.7" height="11.7" fill="none" stroke="#222" stroke-width="1.3"/><path d="M0.6 7 H8.6 V0.6 M4.3 0.6 V7" fill="none" stroke="#222" stroke-width="1.2"/></svg><div style="position:absolute;left:1193px;top:716.5px;width:7px;height:1px;background:#333;"></div><div style="position:absolute;left:1205px;top:716.5px;width:100px;height:1px;background:#8a8a8a;"></div><div style="position:absolute;left:1253px;top:711.5px;width:4.5px;height:11px;background:#7a7a7a;border-radius:1px;"></div><svg style="position:absolute;left:1309px;top:711px;" width="10" height="11" viewBox="0 0 10 11"><path d="M5 0.5 V10.5 M0 5.5 H10" stroke="#333" stroke-width="1"/></svg><div style="position:absolute;left:1330.50px;top:712.27px;white-space:pre;line-height:1;font-family:'Liberation Sans',sans-serif;font-size:11.5px;font-weight:normal;font-style:normal;color:#242424;transform:scaleX(0.8633);transform-origin:0 0;">100%</div><div style="position:absolute;left:0px;top:728px;width:1366px;height:40px;background:#2b251d;"></div><div style="position:absolute;left:496px;top:766px;width:40px;height:2px;background:#f6dfbd;"></div><div style="position:absolute;left:545px;top:766px;width:40px;height:2px;background:#f6dfbd;"></div><div style="position:absolute;left:594px;top:766px;width:40px;height:2px;background:#f6dfbd;"></div><div style="position:absolute;left:643px;top:766px;width:40px;height:2px;background:#f6dfbd;"></div><div style="position:absolute;left:692px;top:766px;width:40px;height:2px;background:#f6dfbd;"></div><div style="position:absolute;left:741px;top:766px;width:40px;height:2px;background:#f6dfbd;"></div><div style="position:absolute;left:786px;top:766px;width:48px;height:2px;background:#f6dfbd;"></div><div style="position:absolute;left:786px;top:728px;width:48px;height:38px;background:#58514a;"></div><svg style="position:absolute;left:15px;top:740px;" width="18" height="16" viewBox="0 0 18 16"><path d="M0 2.2 L7.7 1.1 V7.5 H0Z M8.6 1 L17 0 V7.5 H8.6Z M0 8.4 H7.7 V14.8 L0 13.8Z M8.6 8.4 H17 V16 L8.6 14.9Z" fill="#fff"/></svg><svg style="position:absolute;left:66px;top:736px;" width="19" height="25" viewBox="0 0 19 25"><rect x="0.5" y="0.5" width="18" height="24" rx="1.5" fill="#7d8794" stroke="#5d6570" stroke-width="1"/>
<rect x="2" y="2" width="15" height="4.5" fill="#4fb8f0"/>
<g fill="#e6e6e6"><rect x="2" y="8" width="4" height="4"/><rect x="7.5" y="8" width="4" height="4"/><rect x="13" y="8" width="4" height="4"/>
<rect x="2" y="13.5" width="4" height="4"/><rect x="7.5" y="13.5" width="4" height="4"/><rect x="2" y="19" width="4" height="4"/><rect x="7.5" y="19" width="4" height="4"/></g>
<rect x="13" y="13.5" width="4" height="9.5" fill="#1c4fa0"/></svg><svg style="position:absolute;left:111px;top:736px;" width="25" height="24" viewBox="0 0 25 24"><rect width="25" height="24" fill="#f9c80e"/><rect x="3" y="3" width="19" height="18" fill="#fff6d6"/><circle cx="12.5" cy="12" r="7" fill="none" stroke="#f9c80e" stroke-width="1.5"/><path d="M9.5 11 L12.5 14 L16 9" fill="none" stroke="#f9c80e" stroke-width="1.2"/></svg><svg style="position:absolute;left:160px;top:736px;" width="25" height="25" viewBox="0 0 25 25"><path d="M7 6 V2.5 Q7 1 8.5 1 H16.5 Q18 1 18 2.5 V6" fill="none" stroke="#2b9af3" stroke-width="1.8"/>
<rect x="1" y="5" width="23" height="19" rx="3" fill="#f7f7f7"/>
<rect x="7.5" y="10" width="4.5" height="4.5" fill="#e2412b"/><rect x="13" y="10" width="4.5" height="4.5" fill="#a0833a"/>
<rect x="7.5" y="15.5" width="4.5" height="4.5" fill="#2b9af3"/><rect x="13" y="15.5" width="4.5" height="4.5" fill="#f0a81c"/></svg><svg style="position:absolute;left:209px;top:739px;" width="26" height="19" viewBox="0 0 26 19"><rect x="0.5" y="3" width="24" height="16" rx="2" fill="#707780"/><rect x="2.5" y="1" width="4" height="3" rx="1" fill="#3fa6f0"/>
<rect x="9" y="1" width="8" height="3" rx="1" fill="#707780"/>
<circle cx="12" cy="11" r="6.5" fill="#f4f4f4"/><circle cx="12" cy="11" r="5" fill="#8a6ee0"/><circle cx="13" cy="12" r="3" fill="#5db2f5"/></svg><svg style="position:absolute;left:259px;top:736px;" width="24" height="24" viewBox="0 0 24 24"><rect width="24" height="24" fill="#fff"/><circle cx="12" cy="12" r="7.5" fill="#1b3050" stroke="#e8a050" stroke-width="0.8" stroke-dasharray="1 1"/><text x="8" y="14" font-family="Liberation Sans" font-size="6" fill="#9ab">yu</text></svg><svg style="position:absolute;left:307px;top:736px;" width="25" height="25" viewBox="0 0 25 25"><path d="M2 23 V12 A10.5 10.5 0 0 1 23 12 V23 Z" fill="#6f7882"/>
<circle cx="12.5" cy="12" r="8.5" fill="#f2f2f2"/>
<path d="M12.5 12 L7 9 M12.5 12 L17 8" stroke="#222" stroke-width="1.6"/><path d="M12.5 12 V19" stroke="#e24a1e" stroke-width="1.4"/><circle cx="12.5" cy="12" r="1.5" fill="#222"/></svg><svg style="position:absolute;left:357px;top:739px;" width="25" height="19" viewBox="0 0 25 19"><rect x="0" y="0.5" width="24" height="16" rx="3" fill="#f5102a"/><path d="M9 4.5 V12 L15 8.2 Z" fill="#fff"/>
<circle cx="18" cy="13" r="5.5" fill="#2ea84f"/><path d="M18 13 L13.2 10.2 A5.5 5.5 0 0 1 22.8 10.2 Z" fill="#e5412b"/><path d="M18 13 L22.8 10.2 A5.5 5.5 0 0 1 18 18.5Z" fill="#fbc02d"/>
<circle cx="18" cy="13" r="2.6" fill="#fff"/><circle cx="18" cy="13" r="1.9" fill="#2f7de1"/></svg><svg style="position:absolute;left:405px;top:735px;" width="25" height="25" viewBox="0 0 25 25"><path d="M12.5 1 C5.5 1 1 6 1 12 C1 15.5 2.5 18.5 5 20.5 V24 L8.5 22 C9.8 22.4 11 22.6 12.5 22.6 C19.5 22.6 24 17.8 24 11.8 C24 6 19.5 1 12.5 1Z" fill="#1b78f2"/><path d="M5.5 14.5 L10.5 9 L13 11.5 L19 8 L14 13.8 L11.5 11.2Z" fill="#fff"/></svg><svg style="position:absolute;left:421.0px;top:745.5px;" width="19.0" height="19.0" viewBox="0 0 19.0 19.0"><circle cx="9.5" cy="9.5" r="8.5" fill="#2a2622" stroke="#9a958f" stroke-width="1"/></svg><div style="position:absolute;left:427.00px;top:749.00px;white-space:pre;line-height:1;font-family:'Liberation Sans',sans-serif;font-size:13px;font-weight:bold;font-style:normal;color:#ffffff;transform:scaleX(0.9676);transform-origin:0 0;">7</div><svg style="position:absolute;left:455px;top:737px;" width="23" height="22" viewBox="0 0 23 22"><rect x="1" y="0.5" width="21" height="20" rx="1" fill="#1c7fd6"/><rect x="8" y="3" width="10" height="17" rx="1" fill="#5ab3f0"/><path d="M0 16 L4 20 H1Z" fill="#1566b0"/></svg><svg style="position:absolute;left:468px;top:744px;" width="22" height="22" viewBox="0 0 22 22"><circle cx="11" cy="11" r="10" fill="#2a2622" stroke="#9a958f" stroke-width="1"/></svg><div style="position:absolute;left:472.50px;top:749.00px;white-space:pre;line-height:1;font-family:'Liberation Sans',sans-serif;font-size:13px;font-weight:bold;font-style:normal;color:#ffffff;transform:scaleX(0.8985);transform-origin:0 0;">47</div><svg style="position:absolute;left:504px;top:738px;" width="24" height="19" viewBox="0 0 24 19"><path d="M0.5 2 Q0.5 0.5 2 0.5 H8 L10 2.5 H22 Q23.5 2.5 23.5 4 V18.5 H0.5Z" fill="#f0b431"/><rect x="0.5" y="5" width="23" height="13.5" fill="#fcd46b"/><path d="M4 18.5 V12 Q4 10.5 5.5 10.5 H18.5 Q20 10.5 20 12 V18.5 H16 V14.5 H8 V18.5Z" fill="#2e8fe0"/></svg><svg style="position:absolute;left:552px;top:736px;" width="26" height="26" viewBox="0 0 26 26"><circle cx="12" cy="12" r="11.5" fill="#2ea84f"/><path d="M12 12 L2 6.2 A11.5 11.5 0 0 1 22 6.2 Z" fill="#e5412b"/><path d="M12 12 L22 6.2 A11.5 11.5 0 0 1 12 23.5Z" fill="#fbc02d"/>
<circle cx="12" cy="12" r="5.2" fill="#fff"/><circle cx="12" cy="12" r="4" fill="#2f7de1"/>
<circle cx="18.5" cy="18" r="6.5" fill="#4a4540"/><circle cx="16.5" cy="17" r="1.2" fill="#ccc"/><circle cx="20.5" cy="16.5" r="1" fill="#c44"/><circle cx="18.5" cy="21" r="1.2" fill="#eee"/></svg><svg style="position:absolute;left:600px;top:735px;" width="26" height="26" viewBox="0 0 26 26"><path d="M13 1.5 A11 11 0 1 1 7.5 22 L1.5 24 L3.5 18.3 A11 11 0 0 1 13 1.5Z" fill="none" stroke="#2fcf62" stroke-width="2.2"/><path d="M9 7.5 Q7.5 9.5 9.5 13 Q12 17 16 18 Q18 17.5 18 16 L15.5 14.5 L14 15.5 Q11.5 14 10.5 11.5 L11.5 10 L10 7.5Z" fill="#2fcf62"/></svg><svg style="position:absolute;left:617.0px;top:745.5px;" width="19.0" height="19.0" viewBox="0 0 19.0 19.0"><circle cx="9.5" cy="9.5" r="8.5" fill="#2a2622" stroke="#9a958f" stroke-width="1"/></svg><div style="position:absolute;left:623.00px;top:749.00px;white-space:pre;line-height:1;font-family:'Liberation Sans',sans-serif;font-size:13px;font-weight:bold;font-style:normal;color:#ffffff;transform:scaleX(0.9676);transform-origin:0 0;">2</div><svg style="position:absolute;left:651px;top:736px;" width="27" height="25" viewBox="0 0 27 25"><circle cx="13" cy="11.5" r="10.5" fill="#fff" stroke="#1a5bd0" stroke-width="1.8"/><path d="M3 19 L1 22.5 L6 21" fill="#1a5bd0"/><text x="4.5" y="14.5" font-family="Liberation Sans" font-size="8.5" font-weight="bold" fill="#1a5bd0">imo</text><circle cx="22" cy="20.5" r="3.6" fill="#f6a623" stroke="#fff" stroke-width="1.2"/></svg><svg style="position:absolute;left:699px;top:736px;" width="25" height="25" viewBox="0 0 25 25"><circle cx="12.5" cy="12.5" r="12" fill="#f0731c"/><path d="M8 5 Q15 4 20 17 L17 18.5 Q13 10 8 5Z M5 12 Q12 11 17 19 L15 20 Q10 15 5 12Z M3.5 18 Q9 16.5 13 20.5 L11.5 21.5 Q8 19 3.5 18Z" fill="#fff"/></svg><svg style="position:absolute;left:747px;top:736px;" width="27" height="26" viewBox="0 0 27 26"><circle cx="17" cy="9" r="8" fill="#3d78c8"/><circle cx="15" cy="7" r="4.5" fill="#b8c9a0" opacity="0.8"/>
<ellipse cx="10" cy="15" rx="9" ry="5.5" fill="none" stroke="#f0b020" stroke-width="2.2"/><ellipse cx="10" cy="15.5" rx="6.5" ry="3.5" fill="none" stroke="#2aa050" stroke-width="1.5"/>
<path d="M12 13 L26 17 L19 19 L16 25 Z" fill="#1fa83a"/><path d="M16 25 L19 19 L21 21Z" fill="#111"/></svg><svg style="position:absolute;left:797px;top:745px;top:739px;" width="25" height="22" viewBox="0 0 25 22"><rect x="6" y="0" width="18" height="21" rx="1" fill="#21a366"/>
<rect x="14" y="0" width="10" height="6" fill="#33c481"/><rect x="6" y="14" width="18" height="7" fill="#185c37"/><rect x="14" y="6" width="10" height="8" fill="#107c41"/>
<rect x="0" y="5" width="12.5" height="12" rx="1" fill="#107c41"/>
<path d="M3.3 7.6 L9.2 14.4 M9.2 7.6 L3.3 14.4" stroke="#fff" stroke-width="2"/></svg><svg style="position:absolute;left:951px;top:737px;" width="23" height="23" viewBox="0 0 23 23"><ellipse cx="9" cy="3.5" rx="8" ry="3" fill="#f39c1e"/><ellipse cx="12" cy="8.5" rx="9" ry="3" fill="#f7a825"/>
<ellipse cx="10" cy="12.5" rx="9" ry="3" fill="#f39c1e"/><ellipse cx="9" cy="16.5" rx="8" ry="2.8" fill="#f5a020"/>
<path d="M7 22 L10 19 L13 22" fill="none" stroke="#2f9a3a" stroke-width="1.6"/></svg><div style="position:absolute;left:982.00px;top:741.87px;white-space:pre;line-height:1;font-family:'Liberation Sans',sans-serif;font-size:13.5px;font-weight:normal;font-style:normal;color:#ffffff;transform:scaleX(0.9203);transform-origin:0 0;">GBP...</div><svg style="position:absolute;left:1043px;top:744px;" width="13" height="8" viewBox="0 0 13 8"><path d="M0.7 7.3 L6.5 1 L12.3 7.3" fill="none" stroke="#fff" stroke-width="1.1"/></svg><svg style="position:absolute;left:1064px;top:740px;" width="17" height="14" viewBox="0 0 17 14"><path d="M1 4.5 H4 L8.5 0.8 V13.2 L4 9.5 H1Z" fill="none" stroke="#fff" stroke-width="1.1" stroke-linejoin="round"/><path d="M11 4.5 Q12.5 7 11 9.5 M13.2 2.8 Q15.8 7 13.2 11.2" fill="none" stroke="#fff" stroke-width="1.1"/><path d="M15.5 1 Q19 7 15.5 13" fill="none" stroke="#888" stroke-width="1"/></svg><svg style="position:absolute;left:1091px;top:740px;" width="13" height="16" viewBox="0 0 13 16"><rect x="0.7" y="4" width="8" height="8" rx="1.5" fill="none" stroke="#fff" stroke-width="1.1"/><path d="M8.7 6.5 L12.3 4.5 V11.5 L8.7 9.5" fill="none" stroke="#fff" stroke-width="1.1"/><path d="M2 1.5 Q5 0 9 1.5 M2 14.5 Q5 16 9 14.5" fill="none" stroke="#bbb" stroke-width="1"/></svg><svg style="position:absolute;left:1115px;top:740px;" width="12" height="16" viewBox="0 0 12 16"><rect x="3" y="0.5" width="6" height="10" rx="3" fill="#fff"/><path d="M0.8 7 Q0.8 12.5 6 12.5 Q11.2 12.5 11.2 7 M6 12.5 V15 M3 15.3 H9" fill="none" stroke="#fff" stroke-width="1.1"/></svg><svg style="position:absolute;left:1137px;top:742px;" width="17" height="12" viewBox="0 0 17 12"><path d="M0.5 3 H3 M0.5 7 H3 M3 2 V8 Q3 10 5 10" fill="none" stroke="#fff" stroke-width="1.1"/><rect x="5" y="2.5" width="10" height="8" rx="1" fill="none" stroke="#fff" stroke-width="1.1"/><rect x="6.5" y="4" width="7" height="5" fill="#fff"/><rect x="15.2" y="5" width="1.5" height="3" fill="#fff"/></svg><svg style="position:absolute;left:1163px;top:742px;" width="14" height="14" viewBox="0 0 14 14"><path d="M1 12.5 A11.5 11.5 0 0 1 12.5 1 M3.8 12.5 A8.7 8.7 0 0 1 12.5 3.8 M6.6 12.5 A5.9 5.9 0 0 1 12.5 6.6" fill="none" stroke="#fff" stroke-width="1.1"/><circle cx="11.5" cy="11.5" r="1.8" fill="#fff"/></svg><svg style="position:absolute;left:1185px;top:741px;" width="23" height="13" viewBox="0 0 23 13"><rect x="0.6" y="0.6" width="21.8" height="11.8" rx="1" fill="none" stroke="#fff" stroke-width="1.1"/><path d="M3 3.5 H20 M3 6 H20 M6 9 H17" stroke="#fff" stroke-width="1" stroke-dasharray="1.4 1"/></svg><div style="position:absolute;left:1226.80px;top:744.84px;white-space:pre;line-height:1;font-family:'Liberation Sans',sans-serif;font-size:12px;font-weight:normal;font-style:normal;color:#ffffff;">ع</div><div style="position:absolute;left:1260.00px;top:733.17px;white-space:pre;line-height:1;font-family:'Liberation Sans',sans-serif;font-size:11.5px;font-weight:normal;font-style:normal;color:#ffffff;transform:scaleX(0.9760);transform-origin:0 0;">3:38 PM</div><div style="position:absolute;left:1255.30px;top:750.87px;white-space:pre;line-height:1;font-family:'Liberation Sans',sans-serif;font-size:11.5px;font-weight:normal;font-style:normal;color:#ffffff;transform:scaleX(1.0064);transform-origin:0 0;">5/19/2025</div><svg style="position:absolute;left:1324px;top:740px;" width="18" height="16" viewBox="0 0 18 16"><path d="M0.6 0.6 H16.4 V11.5 H10.5 L8.5 14.5 L6.5 11.5 H0.6Z" fill="none" stroke="#fff" stroke-width="1.1" stroke-linejoin="round"/></svg><div style="position:absolute;left:1361px;top:728px;width:1px;height:40px;background:#6a645c;"></div><svg style="position:absolute;left:596px;top:674px;" width="175" height="56" viewBox="0 0 175 56"><g opacity="0.16" fill="none" stroke="#6a6a6a" stroke-width="7" stroke-linecap="round" stroke-linejoin="round">
<path d="M33 5 V34 Q33 43 24 43 H16 Q6 43 7 35"/>
<path d="M33 43 H155"/>
<circle cx="59" cy="32" r="10.5"/>
<path d="M92 25 V43 M110 25 V43 M128 25 V43"/>
<circle cx="154" cy="34" r="9.5"/>
<g fill="#6a6a6a" stroke="none"><circle cx="55" cy="7" r="4"/><circle cx="67" cy="7.5" r="4"/><circle cx="84" cy="16" r="4"/><circle cx="95" cy="16.5" r="4"/></g>
</g></svg><div style="position:absolute;left:601.00px;top:728.03px;white-space:pre;line-height:1;font-family:'Liberation Sans',sans-serif;font-size:23px;font-weight:bold;font-style:normal;color:#b4b4b4;transform:scaleX(1.1489);transform-origin:0 0;opacity:0.26;">mostaql.com</div>
</body></html>
